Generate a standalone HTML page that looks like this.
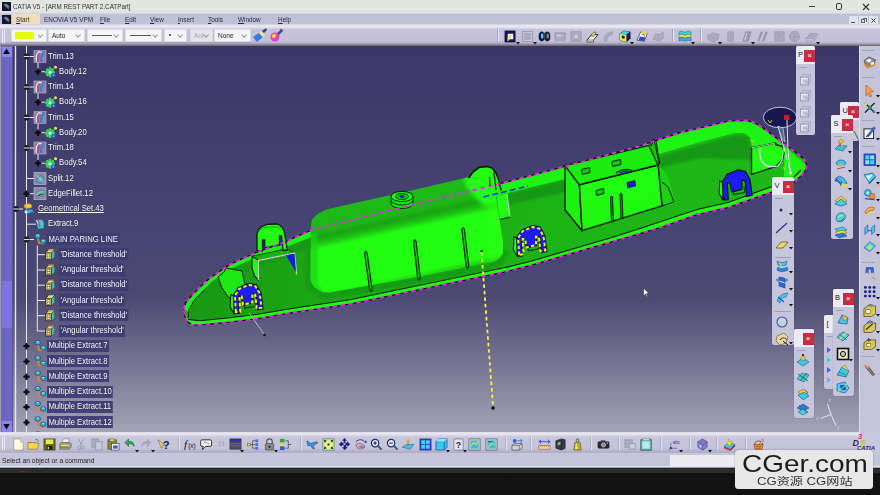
<!DOCTYPE html>
<html><head><meta charset="utf-8"><title>CATIA V5 - [ARM REST PART 2.CATPart]</title>
<style>
*{margin:0;padding:0;box-sizing:border-box}
html,body{width:880px;height:495px;overflow:hidden;background:#111}
body{position:relative;font-family:"Liberation Sans","Noto Sans CJK SC",sans-serif;font-size:8px;color:#222}
.abs{position:absolute}
#title{left:0;top:0;width:880px;height:14px;background:linear-gradient(#e2e5e2 0,#e2e4e1 12px,#d0cfe0 14px)}
#title .t{left:13px;top:1px;font-size:7.8px;line-height:11px;color:#333;white-space:nowrap;transform:scaleX(.81);transform-origin:0 50%}
#menu{left:0;top:13.5px;width:880px;height:11px;background:#c2bfd8}
#menu span{position:absolute;top:0;font-size:7.8px;line-height:11px;color:#2a2a3a;white-space:nowrap;transform:scaleX(.82);transform-origin:0 50%}
#menu u{text-decoration:underline;text-underline-offset:1px}
#tb{left:0;top:23.5px;width:880px;height:23px;background:linear-gradient(#c6c3da 0,#e4e3ee 1px,#e9e8f1 2.5px,#dddbe9 4px,#c6c3db 5.5px,#c4c0da 17px,#b4b1c8 19px,#8c8b98 20.5px,#727278 21.5px,#4a4866 23px)}
.dd{position:absolute;top:5px;height:13px;background:#f5f5f9;border:1px solid #dcdbe8;border-radius:1px;font-size:7.6px;line-height:11px;color:#222;padding-left:3px;white-space:nowrap;box-shadow:0 1px 1px rgba(120,120,150,.35)}
.dd:after{content:"";position:absolute;right:3.5px;top:2.5px;width:3.4px;height:3.4px;border-right:.9px solid #999;border-bottom:.9px solid #999;transform:rotate(45deg)}
.dd i{position:absolute;left:4px;top:5px;height:1px;background:#555;display:block}
#vp{left:0;top:46px;width:880px;height:386px;overflow:hidden;background:linear-gradient(#3c3768 0,#423e6e 27%,#484672 52%,#4b4873 62%,#4e4a73 65.6%,#6e6a8c 78.6%,#8e8ca5 91.5%,#a4a2b4 100%)}
#btb{left:0;top:432px;width:880px;height:22px;background:linear-gradient(#dcdbe8 0,#e8e7f0 1.5px,#dedde9 3px,#c9c7dd 5px,#c6c4da 16px,#b6b4cb 19px,#aeacc4 21px,#e4e3ee 22px)}
#sb{left:0;top:454px;width:880px;height:13.5px;background:linear-gradient(#c6c4da 0,#c6c4da 11.5px,#e4e3ee 12.5px,#a0a0a8 13.5px)}
#sb .t{left:2px;top:1px;font-size:7.8px;line-height:11px;color:#222;white-space:nowrap;transform:scaleX(.86);transform-origin:0 50%}
#blk{left:0;top:467.5px;width:880px;height:27.5px;background:linear-gradient(#1c1e1a 0,#2d2f2b 1.2px,#2a2c28 4.5px,#0b0b0b 6px,#121212 8px,#121212 100%)}
.tr{position:absolute;font-size:8.2px;transform:scaleX(.94);transform-origin:0 50%;line-height:11px;color:#fff;white-space:nowrap;text-shadow:0 0 1px rgba(20,20,60,.9)}
.tr.sel{background:rgba(62,60,115,.95);padding:.5px 1.5px;margin-left:-1.5px;margin-top:-.5px}
.ft{position:absolute;background:#c6c5dc;border-radius:2px;box-shadow:0 0 1px rgba(40,40,80,.6)}
.ft .hd{position:absolute;left:0;top:0;right:0;height:18px;background:#eceaf4;border-radius:2px 2px 0 0;font-size:7.5px;line-height:17px;color:#222;padding-left:2.5px;overflow:hidden}
.ft .x{position:absolute;right:0;top:4px;width:11px;height:12px;background:#c82c44;color:#fff;font-size:8px;line-height:11px;text-align:center}
.sep{position:absolute;background:#9f9eb8}
</style></head><body>
<div id="title" class="abs"><svg style="position:absolute;left:2px;top:2px;" width="9" height="9" viewBox="0 0 9 9"><rect width="9" height="9" fill="#15152a"/><path d="M1.5 2 C4 1.5 6.5 3.5 7.5 7.5 C5.5 6 3 5 1.5 2Z" fill="#3f8fe8"/><path d="M3 1.5 C5 2 7 3.5 7.8 6 C6 4.5 4.5 3 3 1.5Z" fill="#f08a3c"/></svg><div class="abs t">CATIA V5 - [ARM REST PART 2.CATPart]</div><div style="position:absolute;left:809px;top:6px;width:6px;height:1px;background:#444"></div><div style="position:absolute;left:835.5px;top:3px;width:6.5px;height:6.5px;border:1.2px solid #333;border-radius:1.8px"></div><svg style="position:absolute;left:861.5px;top:2.5px;" width="8" height="8" viewBox="0 0 8 8"><path d="M1 1 L7 7 M7 1 L1 7" stroke="#333" stroke-width="1.1" fill="none"/></svg></div>
<div id="menu" class="abs"><svg style="position:absolute;left:2px;top:1px;" width="9" height="9" viewBox="0 0 9 9"><rect width="9" height="9" fill="#15152a"/><path d="M1.5 2 C4 1.5 6.5 3.5 7.5 7.5 C5.5 6 3 5 1.5 2Z" fill="#3f8fe8"/><path d="M3 1.5 C5 2 7 3.5 7.8 6 C6 4.5 4.5 3 3 1.5Z" fill="#f08a3c"/></svg><div style="position:absolute;left:12px;top:0px;width:28px;height:11px;background:#f1dfba"></div><span style="left:16px"><u>S</u>tart</span><span style="left:44px">ENOVIA V5 VPM</span><span style="left:100px"><u>F</u>ile</span><span style="left:125px"><u>E</u>dit</span><span style="left:150px"><u>V</u>iew</span><span style="left:178px"><u>I</u>nsert</span><span style="left:208px"><u>T</u>ools</span><span style="left:238px"><u>W</u>indow</span><span style="left:278px"><u>H</u>elp</span><div style="position:absolute;left:849px;top:2px;width:9px;height:9px;background:#e3e2ef"></div><div style="position:absolute;left:859px;top:2px;width:9px;height:9px;background:#e3e2ef"></div><div style="position:absolute;left:869px;top:2px;width:9px;height:9px;background:#e3e2ef"></div><div style="position:absolute;left:851px;top:8px;width:4px;height:1px;background:#555"></div><div style="position:absolute;left:861px;top:5px;width:4px;height:4px;border:1px solid #666"></div><div style="position:absolute;left:863px;top:4px;width:4px;height:4px;border:1px solid #666;border-bottom:none;border-left:none"></div><svg style="position:absolute;left:870px;top:3px;" width="7" height="7" viewBox="0 0 7 7"><path d="M1.5 1.5 L5.5 5.5 M5.5 1.5 L1.5 5.5" stroke="#444" stroke-width="1" fill="none"/></svg></div>
<div id="tb" class="abs"><div style="position:absolute;left:2px;top:6px;width:1px;height:13px;background:#ecebf4"></div><div style="position:absolute;left:4px;top:6px;width:1px;height:13px;background:#ecebf4"></div><div class="dd" style="margin-top:.5px;left:11px;width:36px"><b style="position:absolute;left:3px;top:2px;width:19px;height:7px;background:#e6ff00"></b></div><div class="dd" style="margin-top:.5px;left:48px;width:37px"><span style="display:inline-block;transform:scaleX(.86);transform-origin:0 50%">Auto</span></div><div class="dd" style="margin-top:.5px;left:87px;width:36px"><i style="width:20px"></i></div><div class="dd" style="margin-top:.5px;left:125px;width:37px"><i style="width:21px"></i></div><div class="dd" style="margin-top:.5px;left:164px;width:23px"><b style="position:absolute;left:4px;top:4px;width:2px;height:2px;background:#333;border-radius:1px"></b></div><div class="dd" style="margin-top:.5px;left:190px;width:23px;color:#aaa;background:#e4e3ee"><span style="display:inline-block;transform:scaleX(.86);transform-origin:0 50%">Aut</span></div><div class="dd" style="margin-top:.5px;left:214px;width:37px"><span style="display:inline-block;transform:scaleX(.86);transform-origin:0 50%">None</span></div><svg style="position:absolute;left:252px;top:4px;" width="16" height="15" viewBox="0 0 16 15"><path d="M1 9 L7 5 L11 9 L5 14 Z" fill="#3a7ce0"/><path d="M7 5 L9 3 L13 7 L11 9Z" fill="#f0e68c"/><path d="M10 3 L14 0 L15 2 L12 5Z" fill="#2a3c90"/></svg><svg style="position:absolute;left:269px;top:4px;" width="15" height="15" viewBox="0 0 15 15"><circle cx="6" cy="9" r="4.5" fill="#e040c0"/><circle cx="5" cy="8" r="2" fill="#ffe030"/><path d="M8 5 L13 1 L14 3 L10 7Z" fill="#2a4ab0"/><path d="M11 1l1 1" stroke="#e03030" stroke-width="1.5"/></svg></div>
<div id="vp" class="abs"><div class="abs" style="left:0;top:-46px;width:880px;height:495px">
<svg style="position:absolute;left:0px;top:0px;" width="880" height="495" viewBox="0 0 880 495"><defs>
<linearGradient id="gf" gradientUnits="userSpaceOnUse" x1="190" y1="0" x2="780" y2="0"><stop offset="0" stop-color="#1a9814"/><stop offset=".2" stop-color="#1ba614"/><stop offset=".55" stop-color="#1cb216"/><stop offset="1" stop-color="#1eb818"/></linearGradient>
<linearGradient id="gb1" gradientUnits="userSpaceOnUse" x1="395" y1="192" x2="415" y2="282"><stop offset="0" stop-color="#1ebc18"/><stop offset=".24" stop-color="#1db616"/><stop offset=".3" stop-color="#1aa414"/><stop offset=".36" stop-color="#1cc014"/><stop offset=".43" stop-color="#22fe12"/><stop offset=".9" stop-color="#22fe12"/><stop offset=".96" stop-color="#1cd014"/><stop offset="1" stop-color="#1cb016"/></linearGradient>
<linearGradient id="gb2" gradientUnits="userSpaceOnUse" x1="580" y1="186" x2="584" y2="232"><stop offset="0" stop-color="#22fe12"/><stop offset="1" stop-color="#1ef412"/></linearGradient>
<filter id="bl"><feGaussianBlur stdDeviation="2"/></filter><filter id="bl05"><feGaussianBlur stdDeviation=".8"/></filter><filter id="bl1"><feGaussianBlur stdDeviation="1.2"/></filter>
</defs><path d="M183.7 309 L185.5 303 L190 297.5 L199 288 L210 278 L230 264.5 L255 253 L287 241 L314 229 L499 184 L565 166.5 L640 146 L678 133 L700 128 L729 121 L746.7 120.5 L753 122 L758 124.5 L767 131 L804.4 159 L806.5 164.4 L806 169 L803 173.5 L794.4 182 L773 191.5 L728 207.5 L697 214.5 L662 227 L640 233.5 L611 242 L530 265.5 L504 272 L350 304 L290 313 L258 318.5 L230 322 L200 325 L192 325 L187 321 L184.5 315Z" fill="url(#gf)" stroke="#041e04" stroke-width="1.200" stroke-linejoin="round"/><clipPath id="cfl"><path d="M183.7 309 L185.5 303 L190 297.5 L199 288 L210 278 L230 264.5 L255 253 L287 241 L314 229 L499 184 L565 166.5 L640 146 L678 133 L700 128 L729 121 L746.7 120.5 L753 122 L758 124.5 L767 131 L804.4 159 L806.5 164.4 L806 169 L803 173.5 L794.4 182 L773 191.5 L728 207.5 L697 214.5 L662 227 L640 233.5 L611 242 L530 265.5 L504 272 L350 304 L290 313 L258 318.5 L230 322 L200 325 L192 325 L187 321 L184.5 315Z"/></clipPath><g clip-path="url(#cfl)"><path d="M199 295 L230 271 L255 260 L287 248 L314 237 L499 196 L565 180 L640 161 L700 145 L735 135 L748 136 L752 150 L752 160 L700 158 L640 173 L565 192 L499 207 L314 247 L287 256 L255 268 L230 279 L204 300Z" fill="#199812" filter="url(#bl1)"/><path d="M183 309 L190 297 L199 288 L210 278 L230 264.5 L255 253 L287 241 L314 229 L499 184 L565 166.5 L640 146 L700 128 L729 121 L747 120.5 L767 131 L806 165 L806 175 L790 186 L784 176 L784 150 L776 142 L752 147 L750 137 L744 133 L735 133 L700 142 L640 159.5 L565 179 L499 195 L314 236 L287 246.5 L255 258 L230 269 L212 281.5 L202 291 L193 301 L189 312Z" fill="#1ef414"/><path d="M188 319.5 L200 320.8 L230 317.8 L258 314.2 L290 308.8 L350 299.8 L504 267.8 L530 261.5 L611 237.8 L640 228.5 L697 209.5 L728 202.5 L772 186.5 L793 178 L801 170 L812 165 L800 195 L773 191.5 L728 207.5 L697 214.5 L662 227 L640 233.5 L611 242 L530 265.5 L504 272 L350 304 L290 313 L258 318.5 L230 322 L200 325 L192 325 L187 321 L184.5 315 L182 318 L186 314Z" fill="#22fe12"/></g><path d="M188 319.5 L200 320.8 L230 317.8 L258 314.2 L290 308.8 L350 299.8 L504 267.8 L530 261.5 L611 237.8 L640 228.5 L697 209.5 L728 202.5 L772 186.5 L793 178 L801 170" fill="none" stroke="#041e04" stroke-width="1.100"/><path d="M183.7 309 L185.5 303 L190 297.5 L199 288 L210 278 L230 264.5 L255 253 L287 241 L314 229 L499 184 L565 166.5 L640 146 L678 133 L700 128 L729 121 L746.7 120.5 L753 122 L758 124.5 L767 131 L804.4 159 L806.5 164.4 L806 169 L803 173.5 L794.4 182 L773 191.5 L728 207.5 L697 214.5 L662 227 L640 233.5 L611 242 L530 265.5 L504 272 L350 304 L290 313 L258 318.5 L230 322 L200 325 L192 325 L187 321 L184.5 315Z" fill="none" stroke="#041e04" stroke-width="1.200" stroke-linejoin="round"/><path d="M188 318 L189 309 L195 299 L205 290" fill="none" stroke="#041e04" stroke-width=".8"/><path d="M660 166 L668 176 L672 190 L676 203 L664 206 L661 190Z" fill="#1cd014"/><path d="M662 182 L668 187 L671 194 L674 202 L662 206" fill="none" stroke="#041e04" stroke-width="1"/><path d="M306 244 L311 240 L311 280 L324 292 L420 277 L496 262 L504 250 L509 252 L501 267 L420 284 L322 300 L305 288Z" fill="#199812" opacity=".8" filter="url(#bl1)"/><path d="M311 224 L312.5 219 L317 214.5 L326 209.5 L420 188.5 L467 177.5 L477 177.5 L484 181 L491 188 L496 197 L503 243 L503 253 L500 258 L494 261.5 L420 276.5 L330 292.5 L322 292 L314 287 L310.6 280Z" fill="url(#gb1)"/><clipPath id="cb1"><path d="M311 224 L312.5 219 L317 214.5 L326 209.5 L420 188.5 L467 177.5 L477 177.5 L484 181 L491 188 L496 197 L503 243 L503 253 L500 258 L494 261.5 L420 276.5 L330 292.5 L322 292 L314 287 L310.6 280Z"/></clipPath><g clip-path="url(#cb1)"><path d="M305 236 L316 232 L318 240 L318 284 L326 296 L318 296 L305 287Z" fill="#1cd414" opacity=".7" filter="url(#bl1)"/><path d="M486 196 L498 192 L510 243 L508 258 L500 266 L488 266Z" fill="#34ff1c" opacity=".3" filter="url(#bl1)"/><path d="M462 170 L505 166 L505 204 L484 206 L474 196 L466 186Z" fill="#22fe12" filter="url(#bl)"/></g><path d="M364.5 253q1.300-3.500 2.600 0L372.3 290q-1.300 3-2.600 0Z" fill="#12c80e" stroke="#041e04" stroke-width="1.100"/><path d="M413.5 241.5q1.300-3.500 2.600 0L420.3 278.5q-1.300 3-2.600 0Z" fill="#12c80e" stroke="#041e04" stroke-width="1.100"/><path d="M461.8 229.5q1.300-3.500 2.600 0L468.8 266.5q-1.300 3-2.600 0Z" fill="#12c80e" stroke="#041e04" stroke-width="1.100"/><path d="M391 203.500v-7a11 5 0 0 1 22 0v7a11 5 0 0 1-22 0z" fill="#16e60e" stroke="#041e04" stroke-width=".9"/><path d="M391 200a11 5 0 0 0 22 0" fill="none" stroke="#041e04" stroke-width=".8"/><ellipse cx="402" cy="196.500" rx="11" ry="5" fill="#22fe12" stroke="#041e04" stroke-width=".9"/><ellipse cx="402" cy="196.500" rx="6.500" ry="3" fill="#0aca0a" stroke="#041e04" stroke-width=".8"/><ellipse cx="402" cy="196.500" rx="2.600" ry="1.400" fill="#1a1ae8"/><path d="M469 177.5 L473 172 L479 167.5 L487 166.4 L492 168 L496 173 L498 178 L501 190 L497 197 L491 188 L484 181 L477 177.5Z" fill="#22fe12"/><path d="M469 177.5 L473 172 L479 167.5 L487 166.4 L492 168 L496 173 L498 178 L501 190" fill="none" stroke="#041e04" stroke-width="1.600" stroke-linejoin="round" stroke-linecap="round"/><path d="M489.500 177l.5 9M494 172l2 18" stroke="#041e04" stroke-width="1.200"/><path d="M496.5 196 L507 193.5 L510 217 L500 219.5Z" fill="#22fe12"/><path d="M507 193.500L510 217" stroke="#d8d8e8" stroke-width=".9"/><path d="M510 217L500 219.500" stroke="#041e04" stroke-width="1.200"/><path d="M565 165.6 L579.4 184.8 L582 230.7 L565 209.7Z" fill="#1cf210" stroke="#041e04" stroke-width="1.400" stroke-linejoin="round"/><path d="M579.4 184.8 L658 165 L662 205.8 L582 230.7Z" fill="url(#gb2)" stroke="#041e04" stroke-width="1.400" stroke-linejoin="round"/><path d="M565 165.6 L649 145.4 L658 165 L579.4 184.8Z" fill="#1aec10" stroke="#041e04" stroke-width="1.400" stroke-linejoin="round"/><path d="M649 145.4 L654 139.5 L659.4 163.8 L658 165Z" fill="#0aca0a" stroke="#041e04" stroke-width="1"/><path d="M651 146l3-6.500M656 141l3.400 23" stroke="#041e04" stroke-width="1.100"/><path d="M581.5 169.5 L589.5 167.5 L590 172.5 L582 174.5Z" fill="#0aca0a" stroke="#041e04" stroke-width="1"/><path d="M612 161.5 L620.5 159.5 L621 164.5 L612.5 166.5Z" fill="#0aca0a" stroke="#041e04" stroke-width="1"/><path d="M596 190.5 L603.5 188.5 L604 193.5 L596.5 195.5Z" fill="#0aca0a" stroke="#041e04" stroke-width="1"/><path d="M627 182.5 L635 180.5 L635.5 186 L627.5 188Z" fill="#1a1ae8" stroke="#041e04" stroke-width=".7"/><path d="M616 173q8-6 16-2.500" fill="none" stroke="#041e04" stroke-width="1.100"/><path d="M619 172.500q6-3.500 11-1.500l-1 1.500q-5-1-9 1z" fill="#2020c8"/><path d="M610.5 197q1-2 2 0L613.5 222h-2Z" fill="#06ac06" stroke="#041e04" stroke-width="1"/><path d="M620 194q1-2 2 0L623 218.5h-2Z" fill="#06ac06" stroke="#041e04" stroke-width="1"/><path d="M751.5 147.8 L775.5 143 L776 145 L782 146 L784 153 L783 158 L779 163.5 L775.5 166.7 L751.5 174.4Z" fill="#22fe12" stroke="#041e04" stroke-width="1.400" stroke-linejoin="round"/><path d="M252 256 L258.4 260.5 L294.5 253 L287.4 249Z" fill="#1cb216" stroke="#041e04" stroke-width=".6"/><path d="M252 256 L258.4 260.5 L258.4 280 L254.5 276 L252 268Z" fill="#22fe12" stroke="#041e04" stroke-width="1.100" stroke-linejoin="round"/><path d="M258.4 280 L258.4 260.5 L294.5 253 L296.6 274.4" fill="none" stroke="#c4ccc4" stroke-width="1.300"/><path d="M286 255.3 L294.5 253.8 L296 272.3Z" fill="#1a1ae8"/><path d="M257 250.5 L257 233.5 L259 229 L262 226.3 L267 224.3 L277 224 L280 225.5 L282.4 227.7 L284 231 L285 236 L287.4 250 L283 250.5 L281.5 236 L279.5 236 L279.5 245 L264.8 248 L264.8 240 L262.5 240 L262.5 251Z" fill="#22fe12" stroke="#041e04" stroke-width="1.300" stroke-linejoin="round"/><path d="M263.600 241v9M280.500 237.500v8" stroke="#1a1aa8" stroke-width="1.600"/><path d="M259.500 230.500q3-3 7.500-3.500h9q3 0 5 3" fill="none" stroke="#041e04" stroke-width=".7" opacity=".6"/><path d="M218 277 L224 272 L226 268 L242 271 L246 290 L243 292 L240 296 L233 300 L228 297 L222 288Z" fill="#1ee814"/><path d="M218 277 L224 272 L226 268 L242 271 L246 290 L243 292 L240 296" fill="none" stroke="#041e04" stroke-width="1"/><path d="M218 277 L222 288 L228 297 L233 300" fill="none" stroke="#041e04" stroke-width="1"/><path d="M230.72 294.18 L230.18 307.14 L233.96 313.62 L233.96 296.34Z" fill="#22fe12" stroke="#041e04" stroke-width="1.100" stroke-linejoin="round"/><path d="M234.5 313.6 L233.4 295.3 L238.3 287.7 L249.1 283.4 L256.6 285.0 L261.0 293.1 L263.1 308.8 L257.7 309.8 L256.1 294.2 L252.9 293.6 L252.9 302.8 L242.6 305.5 L241.0 296.3 L238.3 296.3 L239.4 313.1Z" fill="#1c1cf0" stroke="#041e04" stroke-width="1.300" stroke-linejoin="round"/><path d="M244.22 300.66 L244.76 308.22 L255.56 306.06 L255.02 299.58" fill="none" stroke="#041e04" stroke-width=".9"/><path d="M235.8 312.1 L234.9 295.6 L239.3 288.8 L249.0 284.9 L255.7 286.4 L259.7 293.6 L261.6 307.8 L256.7 308.7 L255.3 294.6 L252.4 294.1 L252.4 302.4 L243.1 304.8 L241.7 296.5 L239.3 296.5 L240.3 311.6Z" fill="none" stroke="#f6ea30" stroke-width="2" stroke-dasharray="3.400 2.400"/><path d="M513.9 236.6 L513.35 249.8 L517.2 256.4 L517.2 238.8Z" fill="#22fe12" stroke="#041e04" stroke-width="1.100" stroke-linejoin="round"/><path d="M517.8 256.4 L516.6 237.7 L521.6 230.0 L532.6 225.6 L540.3 227.2 L544.7 235.5 L546.9 251.4 L541.4 252.6 L539.8 236.6 L536.5 236.1 L536.5 245.4 L526.0 248.2 L524.4 238.8 L521.6 238.8 L522.7 255.8Z" fill="#1c1cf0" stroke="#041e04" stroke-width="1.300" stroke-linejoin="round"/><path d="M527.65 243.2 L528.2 250.9 L539.2 248.7 L538.65 242.1" fill="none" stroke="#041e04" stroke-width=".9"/><path d="M519.2 254.9 L518.1 238.0 L522.6 231.1 L532.5 227.1 L539.4 228.6 L543.4 236.1 L545.4 250.4 L540.4 251.4 L539.0 237.0 L536.0 236.6 L536.0 245.0 L526.5 247.5 L525.1 239.0 L522.6 239.0 L523.6 254.3Z" fill="none" stroke="#f6ea30" stroke-width="2" stroke-dasharray="3.400 2.400"/><path d="M719.72 180.68 L719.18 193.64 L722.96 200.12 L722.96 182.84Z" fill="#22fe12" stroke="#041e04" stroke-width="1.100" stroke-linejoin="round"/><path d="M723.5 200.1 L722.4 181.8 L727.3 174.2 L738.1 169.9 L745.6 171.5 L750.0 179.6 L752.1 195.3 L746.7 196.3 L745.1 180.7 L741.9 180.1 L741.9 189.3 L731.6 192.0 L730.0 182.8 L727.3 182.8 L728.4 199.6Z" fill="#1c1cf0" stroke="#041e04" stroke-width="1.300" stroke-linejoin="round"/><path d="M733.22 187.16 L733.76 194.72 L744.56 192.56 L744.02 186.08" fill="none" stroke="#041e04" stroke-width=".9"/><path d="M183.7 309 L185.5 303 L190 297.5 L199 288 L210 278 L230 264.5 L255 253 L287 241 L314 229 L499 184 L565 166.5 L640 146 L678 133 L700 128 L729 121 L746.7 120.5 L753 122 L758 124.5 L767 131 L804.4 159 L806.5 164.4 L806 169 L803 173.5 L794.4 182 L773 191.5 L728 207.5 L697 214.5 L662 227 L640 233.5 L611 242 L530 265.5 L504 272 L350 304 L290 313 L258 318.5 L230 322 L200 325 L192 325 L187 321 L184.5 315Z" fill="none" stroke="#f224f2" stroke-width="1.800" stroke-dasharray="4.500 3.500" stroke-linejoin="round"/><path d="M483.500 197L528 186" stroke="#1a30e8" stroke-width="1.600" stroke-dasharray="6 3"/><path d="M481.500 252L493 406" stroke="#f4f438" stroke-width="1.800" stroke-dasharray="3.500 3"/><circle cx="481.500" cy="251" r="1.200" fill="#111"/><circle cx="493" cy="408" r="1.800" fill="#0a0a14"/><path d="M249 313L264 334" stroke="#b8b8c8" stroke-width="1"/><circle cx="264.500" cy="335" r="1.300" fill="#111"/><ellipse cx="780" cy="117.500" rx="16.700" ry="10.300" fill="#17174f" stroke="#d8d0f0" stroke-width=".9"/><rect x="784" y="115" width="5" height="5" fill="#e01020"/><path d="M787 120L788 150L790.500 172" fill="none" stroke="#e0d8f4" stroke-width="1"/><path d="M778 126L790.500 172" fill="none" stroke="#e0d8f4" stroke-width="1"/><path d="M760 148Q758 170 778 166Q784 160 783 148" fill="none" stroke="#e0d8f4" stroke-width="1.100"/><path d="M751.500 147.800L775.500 143" stroke="#e0d8f4" stroke-width=".8"/><path d="M778 126Q781 138 785 142L783 128Z" fill="#3a8a90" fill-opacity=".7" stroke="#e0d8f4" stroke-width=".6"/><circle cx="790.500" cy="173" r="1.500" fill="#e8e0ff"/><path d="M768 120l2 3 2-3" stroke="#d8d040" stroke-width=".9" fill="none"/><path d="M751 140l1.500 2.500 1.500-2.500" stroke="#c8e040" stroke-width=".8" fill="none"/><path d="M783 167l1.500 2.500 1.500-2.500" stroke="#c8e040" stroke-width=".8" fill="none"/><path d="M643.500 288v8l2-2 1.500 3 1-.5-1.500-3h2.500z" fill="#f4f4f8" stroke="#222" stroke-width=".5"/><path d="M831 414.500L827.500 404M831 414.500L820.500 418.500M831 414.500L836 425.500" stroke="#dcdbe8" stroke-width="1.100" fill="none"/><text x="828.500" y="402" font-family="Liberation Sans" font-size="5" fill="#d0cfe0">z</text><text x="837" y="429" font-family="Liberation Sans" font-size="5" fill="#d0cfe0">y</text><text x="816" y="420" font-family="Liberation Sans" font-size="5" fill="#d0cfe0">x</text></svg>
<div style="position:absolute;left:0px;top:46px;width:12.5px;height:387px;background:#6e66c0;border-left:1px solid #a0a0aa;border-right:1px solid #5a5498"></div><div style="position:absolute;left:1.5px;top:46.5px;width:10px;height:10px;background:#8c84e6"></div><svg style="position:absolute;left:3px;top:48px;" width="7" height="7" viewBox="0 0 7 7"><path d="M3.500 .5L6.800 6H.2z" fill="#0a0a18"/></svg><div style="position:absolute;left:1.5px;top:281px;width:10px;height:47px;background:#7b73de"></div><div style="position:absolute;left:1.5px;top:421px;width:10px;height:11px;background:#8c84e6"></div><svg style="position:absolute;left:3px;top:423px;" width="7" height="7" viewBox="0 0 7 7"><path d="M3.500 6.500L6.800 1H.2z" fill="#0a0a18"/></svg><svg style="position:absolute;left:0px;top:0px;" width="140" height="495" viewBox="0 0 140 495"><path d="M15.500 46V433" stroke="#e8e8f2" stroke-width="1.400"/><path d="M26.500 46V433" stroke="#e8e8f2" stroke-width="1"/><path d="M26.500 56.5H34" stroke="#e8e8f2" stroke-width="1"/><circle cx="26.5" cy="56.5" r="3" fill="#1c1c24"/><path d="M23.7 56.5h5.600" stroke="#d8d8e0" stroke-width="1.100"/><rect x="34" y="50.5" width="12" height="12" fill="#85839e" stroke="#b8b6cc" stroke-width=".6"/><path d="M36.5 61.5c-1-5 0-8 3-10" stroke="#e8e8f4" stroke-width="1.300" fill="none"/><path d="M38 61.5c0-4 0-6 1-8" stroke="#c84858" stroke-width="1.800" fill="none"/><path d="M41 61.5c0-5 1-8 3-10" stroke="#3a7ae0" stroke-width="2" fill="none"/><path d="M43.5 61.5v-5" stroke="#38b8d8" stroke-width="1.200" fill="none"/><path d="M39 51.5l3 1" stroke="#f0f0f8" stroke-width="1"/><path d="M38 62.5V71.7H45" stroke="#e8e8f2" stroke-width="1" fill="none"/><circle cx="38" cy="71.7" r="2.300" fill="#2a2a3a"/><path d="M34.8 71.7h6.400M38 68.5v6.400" stroke="#0a0a10" stroke-width="1.700"/><circle cx="53.60" cy="72.20" r="1.500" fill="#30d858"/><circle cx="52.55" cy="74.75" r="1.500" fill="#30d858"/><circle cx="50.00" cy="75.80" r="1.500" fill="#30d858"/><circle cx="47.45" cy="74.75" r="1.500" fill="#30d858"/><circle cx="46.40" cy="72.20" r="1.500" fill="#30d858"/><circle cx="47.45" cy="69.65" r="1.500" fill="#30d858"/><circle cx="50.00" cy="68.60" r="1.500" fill="#30d858"/><circle cx="52.55" cy="69.65" r="1.500" fill="#30d858"/><circle cx="50" cy="72.2" r="3" fill="#38d060"/><circle cx="50" cy="72.2" r="1.500" fill="#e8fff0"/><circle cx="55.5" cy="67.2" r="1.500" fill="#f8e830"/><circle cx="53.5" cy="75.2" r="2.300" fill="#2450e0"/><circle cx="53.5" cy="75.2" r=".9" fill="#9ab8ff"/><path d="M26.500 87H34" stroke="#e8e8f2" stroke-width="1"/><circle cx="26.5" cy="87" r="3" fill="#1c1c24"/><path d="M23.7 87h5.600" stroke="#d8d8e0" stroke-width="1.100"/><rect x="34" y="81" width="12" height="12" fill="#85839e" stroke="#b8b6cc" stroke-width=".6"/><path d="M36.5 92c-1-5 0-8 3-10" stroke="#e8e8f4" stroke-width="1.300" fill="none"/><path d="M38 92c0-4 0-6 1-8" stroke="#c84858" stroke-width="1.800" fill="none"/><path d="M41 92c0-5 1-8 3-10" stroke="#3a7ae0" stroke-width="2" fill="none"/><path d="M43.5 92v-5" stroke="#38b8d8" stroke-width="1.200" fill="none"/><path d="M39 82l3 1" stroke="#f0f0f8" stroke-width="1"/><path d="M38 93V102.2H45" stroke="#e8e8f2" stroke-width="1" fill="none"/><circle cx="38" cy="102.2" r="2.300" fill="#2a2a3a"/><path d="M34.8 102.2h6.400M38 99.0v6.400" stroke="#0a0a10" stroke-width="1.700"/><circle cx="53.60" cy="102.70" r="1.500" fill="#30d858"/><circle cx="52.55" cy="105.25" r="1.500" fill="#30d858"/><circle cx="50.00" cy="106.30" r="1.500" fill="#30d858"/><circle cx="47.45" cy="105.25" r="1.500" fill="#30d858"/><circle cx="46.40" cy="102.70" r="1.500" fill="#30d858"/><circle cx="47.45" cy="100.15" r="1.500" fill="#30d858"/><circle cx="50.00" cy="99.10" r="1.500" fill="#30d858"/><circle cx="52.55" cy="100.15" r="1.500" fill="#30d858"/><circle cx="50" cy="102.7" r="3" fill="#38d060"/><circle cx="50" cy="102.7" r="1.500" fill="#e8fff0"/><circle cx="55.5" cy="97.7" r="1.500" fill="#f8e830"/><circle cx="53.5" cy="105.7" r="2.300" fill="#2450e0"/><circle cx="53.5" cy="105.7" r=".9" fill="#9ab8ff"/><path d="M26.500 117.5H34" stroke="#e8e8f2" stroke-width="1"/><circle cx="26.5" cy="117.5" r="3" fill="#1c1c24"/><path d="M23.7 117.5h5.600" stroke="#d8d8e0" stroke-width="1.100"/><rect x="34" y="111.5" width="12" height="12" fill="#85839e" stroke="#b8b6cc" stroke-width=".6"/><path d="M36.5 122.5c-1-5 0-8 3-10" stroke="#e8e8f4" stroke-width="1.300" fill="none"/><path d="M38 122.5c0-4 0-6 1-8" stroke="#c84858" stroke-width="1.800" fill="none"/><path d="M41 122.5c0-5 1-8 3-10" stroke="#3a7ae0" stroke-width="2" fill="none"/><path d="M43.5 122.5v-5" stroke="#38b8d8" stroke-width="1.200" fill="none"/><path d="M39 112.5l3 1" stroke="#f0f0f8" stroke-width="1"/><path d="M38 123.5V132.7H45" stroke="#e8e8f2" stroke-width="1" fill="none"/><circle cx="38" cy="132.7" r="2.300" fill="#2a2a3a"/><path d="M34.8 132.7h6.400M38 129.5v6.400" stroke="#0a0a10" stroke-width="1.700"/><circle cx="53.60" cy="133.20" r="1.500" fill="#30d858"/><circle cx="52.55" cy="135.75" r="1.500" fill="#30d858"/><circle cx="50.00" cy="136.80" r="1.500" fill="#30d858"/><circle cx="47.45" cy="135.75" r="1.500" fill="#30d858"/><circle cx="46.40" cy="133.20" r="1.500" fill="#30d858"/><circle cx="47.45" cy="130.65" r="1.500" fill="#30d858"/><circle cx="50.00" cy="129.60" r="1.500" fill="#30d858"/><circle cx="52.55" cy="130.65" r="1.500" fill="#30d858"/><circle cx="50" cy="133.2" r="3" fill="#38d060"/><circle cx="50" cy="133.2" r="1.500" fill="#e8fff0"/><circle cx="55.5" cy="128.2" r="1.500" fill="#f8e830"/><circle cx="53.5" cy="136.2" r="2.300" fill="#2450e0"/><circle cx="53.5" cy="136.2" r=".9" fill="#9ab8ff"/><path d="M26.500 148H34" stroke="#e8e8f2" stroke-width="1"/><circle cx="26.5" cy="148" r="3" fill="#1c1c24"/><path d="M23.7 148h5.600" stroke="#d8d8e0" stroke-width="1.100"/><rect x="34" y="142" width="12" height="12" fill="#85839e" stroke="#b8b6cc" stroke-width=".6"/><path d="M36.5 153c-1-5 0-8 3-10" stroke="#e8e8f4" stroke-width="1.300" fill="none"/><path d="M38 153c0-4 0-6 1-8" stroke="#c84858" stroke-width="1.800" fill="none"/><path d="M41 153c0-5 1-8 3-10" stroke="#3a7ae0" stroke-width="2" fill="none"/><path d="M43.5 153v-5" stroke="#38b8d8" stroke-width="1.200" fill="none"/><path d="M39 143l3 1" stroke="#f0f0f8" stroke-width="1"/><path d="M38 154V163.2H45" stroke="#e8e8f2" stroke-width="1" fill="none"/><circle cx="38" cy="163.2" r="2.300" fill="#2a2a3a"/><path d="M34.8 163.2h6.400M38 160.0v6.400" stroke="#0a0a10" stroke-width="1.700"/><circle cx="53.60" cy="163.70" r="1.500" fill="#30d858"/><circle cx="52.55" cy="166.25" r="1.500" fill="#30d858"/><circle cx="50.00" cy="167.30" r="1.500" fill="#30d858"/><circle cx="47.45" cy="166.25" r="1.500" fill="#30d858"/><circle cx="46.40" cy="163.70" r="1.500" fill="#30d858"/><circle cx="47.45" cy="161.15" r="1.500" fill="#30d858"/><circle cx="50.00" cy="160.10" r="1.500" fill="#30d858"/><circle cx="52.55" cy="161.15" r="1.500" fill="#30d858"/><circle cx="50" cy="163.7" r="3" fill="#38d060"/><circle cx="50" cy="163.7" r="1.500" fill="#e8fff0"/><circle cx="55.5" cy="158.7" r="1.500" fill="#f8e830"/><circle cx="53.5" cy="166.7" r="2.300" fill="#2450e0"/><circle cx="53.5" cy="166.7" r=".9" fill="#9ab8ff"/><path d="M26.500 178.5H34" stroke="#e8e8f2" stroke-width="1"/><rect x="34" y="172.5" width="12" height="12" fill="#8e8ca8" stroke="#c0bed4" stroke-width=".6"/><path d="M36 181.5l4-6 4 2-3 6z" fill="#58b8c8" stroke="#2a4a6a" stroke-width=".5"/><path d="M37 175.5l6 6" stroke="#e8e8f0" stroke-width=".8"/><path d="M26.500 193.7H34" stroke="#e8e8f2" stroke-width="1"/><circle cx="26.5" cy="193.7" r="2.300" fill="#2a2a3a"/><path d="M23.3 193.7h6.400M26.5 190.5v6.400" stroke="#0a0a10" stroke-width="1.700"/><rect x="34" y="187.7" width="12" height="12" fill="#8e8ca8" stroke="#c0bed4" stroke-width=".6"/><path d="M35 194.7c2-4 6-5 10-4v5c-3 0-6 1-8 3z" fill="#68c0b8" stroke="#3a5a6a" stroke-width=".5"/><path d="M36 196.7c3-3 6-3 9-3" stroke="#d06070" stroke-width="1"/><path d="M15.300 209H23" stroke="#e8e8f2" stroke-width="1"/><circle cx="16" cy="209" r="3" fill="#1c1c24"/><path d="M13.2 209h5.600" stroke="#d8d8e0" stroke-width="1.100"/><ellipse cx="28" cy="206" rx="4" ry="2.5" fill="#f0c838" stroke="#8a6a10" stroke-width=".5"/><path d="M24 210l8-1 2 3-7 2z" fill="#38a8e8" stroke="#1a4a8a" stroke-width=".5"/><circle cx="26" cy="212" r="1.5" fill="#e8e8f8"/><path d="M26.500 224.2H36" stroke="#e8e8f2" stroke-width="1"/><path d="M36 220.2l6-1 2 3v6l-6 1z" fill="#38c8d8" stroke="#1a5a7a" stroke-width=".5"/><path d="M38 219.2l2 8" stroke="#e04858" stroke-width="1.3"/><path d="M36 220.2l2 3" stroke="#f0f0f8" stroke-width=".8"/><path d="M26.500 239.5H34" stroke="#e8e8f2" stroke-width="1"/><circle cx="26.5" cy="239.5" r="3" fill="#1c1c24"/><path d="M23.7 239.5h5.600" stroke="#d8d8e0" stroke-width="1.100"/><path d="M37.5 236.5L39 243.0L44 243.5" stroke="#e88020" stroke-width="2" fill="none" stroke-linejoin="round"/><ellipse cx="37.8" cy="236.0" rx="2.800" ry="2.300" fill="#28b8c8" stroke="#1a3a8a" stroke-width=".7"/><ellipse cx="43.3" cy="241.3" rx="2.800" ry="2.300" fill="#28b8c8" stroke="#1a3a8a" stroke-width=".7"/><path d="M36.5 235.0l2.500 0M42 240.3l2.500 0" stroke="#b8f0f0" stroke-width=".8"/><path d="M37.300 245.5V331" stroke="#e8e8f2" stroke-width="1"/><path d="M37.300 254.7H45" stroke="#e8e8f2" stroke-width="1"/><path d="M45.5 252.7l3-3h6v7l-3 3H45.5z" fill="#e8d878" stroke="#2a200a" stroke-width=".8"/><path d="M51.5 252.7l3-3v7l-3 3z" fill="#38c0b8"/><path d="M45.5 252.7h6v7M51.5 252.7l3-3" stroke="#2a200a" stroke-width=".7" fill="none"/><rect x="47.0" y="253.89999999999998" width="3" height="4.600" fill="#fff8c8" stroke="#5a3a10" stroke-width=".6"/><path d="M47.0 256.2h3" stroke="#5a3a10" stroke-width=".6"/><path d="M48.5 249.7h5.500" stroke="#d8a878" stroke-width="1"/><path d="M37.300 270H45" stroke="#e8e8f2" stroke-width="1"/><path d="M45.5 268l3-3h6v7l-3 3H45.5z" fill="#e8d878" stroke="#2a200a" stroke-width=".8"/><path d="M51.5 268l3-3v7l-3 3z" fill="#38c0b8"/><path d="M45.5 268h6v7M51.5 268l3-3" stroke="#2a200a" stroke-width=".7" fill="none"/><rect x="47.0" y="269.2" width="3" height="4.600" fill="#fff8c8" stroke="#5a3a10" stroke-width=".6"/><path d="M47.0 271.5h3" stroke="#5a3a10" stroke-width=".6"/><path d="M48.5 265h5.500" stroke="#d8a878" stroke-width="1"/><path d="M37.300 285.2H45" stroke="#e8e8f2" stroke-width="1"/><path d="M45.5 283.2l3-3h6v7l-3 3H45.5z" fill="#e8d878" stroke="#2a200a" stroke-width=".8"/><path d="M51.5 283.2l3-3v7l-3 3z" fill="#38c0b8"/><path d="M45.5 283.2h6v7M51.5 283.2l3-3" stroke="#2a200a" stroke-width=".7" fill="none"/><rect x="47.0" y="284.4" width="3" height="4.600" fill="#fff8c8" stroke="#5a3a10" stroke-width=".6"/><path d="M47.0 286.7h3" stroke="#5a3a10" stroke-width=".6"/><path d="M48.5 280.2h5.500" stroke="#d8a878" stroke-width="1"/><path d="M37.300 300.5H45" stroke="#e8e8f2" stroke-width="1"/><path d="M45.5 298.5l3-3h6v7l-3 3H45.5z" fill="#e8d878" stroke="#2a200a" stroke-width=".8"/><path d="M51.5 298.5l3-3v7l-3 3z" fill="#38c0b8"/><path d="M45.5 298.5h6v7M51.5 298.5l3-3" stroke="#2a200a" stroke-width=".7" fill="none"/><rect x="47.0" y="299.7" width="3" height="4.600" fill="#fff8c8" stroke="#5a3a10" stroke-width=".6"/><path d="M47.0 302.0h3" stroke="#5a3a10" stroke-width=".6"/><path d="M48.5 295.5h5.500" stroke="#d8a878" stroke-width="1"/><path d="M37.300 315.7H45" stroke="#e8e8f2" stroke-width="1"/><path d="M45.5 313.7l3-3h6v7l-3 3H45.5z" fill="#e8d878" stroke="#2a200a" stroke-width=".8"/><path d="M51.5 313.7l3-3v7l-3 3z" fill="#38c0b8"/><path d="M45.5 313.7h6v7M51.5 313.7l3-3" stroke="#2a200a" stroke-width=".7" fill="none"/><rect x="47.0" y="314.9" width="3" height="4.600" fill="#fff8c8" stroke="#5a3a10" stroke-width=".6"/><path d="M47.0 317.2h3" stroke="#5a3a10" stroke-width=".6"/><path d="M48.5 310.7h5.500" stroke="#d8a878" stroke-width="1"/><path d="M37.300 331H45" stroke="#e8e8f2" stroke-width="1"/><path d="M45.5 329l3-3h6v7l-3 3H45.5z" fill="#e8d878" stroke="#2a200a" stroke-width=".8"/><path d="M51.5 329l3-3v7l-3 3z" fill="#38c0b8"/><path d="M45.5 329h6v7M51.5 329l3-3" stroke="#2a200a" stroke-width=".7" fill="none"/><rect x="47.0" y="330.2" width="3" height="4.600" fill="#fff8c8" stroke="#5a3a10" stroke-width=".6"/><path d="M47.0 332.5h3" stroke="#5a3a10" stroke-width=".6"/><path d="M48.5 326h5.500" stroke="#d8a878" stroke-width="1"/><circle cx="26.5" cy="346.2" r="2.300" fill="#2a2a3a"/><path d="M23.3 346.2h6.400M26.5 343.0v6.400" stroke="#0a0a10" stroke-width="1.700"/><path d="M37.5 343.2L39 349.7L44 350.2" stroke="#e88020" stroke-width="2" fill="none" stroke-linejoin="round"/><ellipse cx="37.8" cy="342.7" rx="2.800" ry="2.300" fill="#28b8c8" stroke="#1a3a8a" stroke-width=".7"/><ellipse cx="43.3" cy="348.0" rx="2.800" ry="2.300" fill="#28b8c8" stroke="#1a3a8a" stroke-width=".7"/><path d="M36.5 341.7l2.500 0M42 347.0l2.500 0" stroke="#b8f0f0" stroke-width=".8"/><circle cx="26.5" cy="361.5" r="2.300" fill="#2a2a3a"/><path d="M23.3 361.5h6.400M26.5 358.3v6.400" stroke="#0a0a10" stroke-width="1.700"/><path d="M37.5 358.5L39 365.0L44 365.5" stroke="#e88020" stroke-width="2" fill="none" stroke-linejoin="round"/><ellipse cx="37.8" cy="358.0" rx="2.800" ry="2.300" fill="#28b8c8" stroke="#1a3a8a" stroke-width=".7"/><ellipse cx="43.3" cy="363.3" rx="2.800" ry="2.300" fill="#28b8c8" stroke="#1a3a8a" stroke-width=".7"/><path d="M36.5 357.0l2.500 0M42 362.3l2.500 0" stroke="#b8f0f0" stroke-width=".8"/><circle cx="26.5" cy="376.7" r="2.300" fill="#2a2a3a"/><path d="M23.3 376.7h6.400M26.5 373.5v6.400" stroke="#0a0a10" stroke-width="1.700"/><path d="M37.5 373.7L39 380.2L44 380.7" stroke="#e88020" stroke-width="2" fill="none" stroke-linejoin="round"/><ellipse cx="37.8" cy="373.2" rx="2.800" ry="2.300" fill="#28b8c8" stroke="#1a3a8a" stroke-width=".7"/><ellipse cx="43.3" cy="378.5" rx="2.800" ry="2.300" fill="#28b8c8" stroke="#1a3a8a" stroke-width=".7"/><path d="M36.5 372.2l2.500 0M42 377.5l2.500 0" stroke="#b8f0f0" stroke-width=".8"/><circle cx="26.5" cy="392" r="2.300" fill="#2a2a3a"/><path d="M23.3 392h6.400M26.5 388.8v6.400" stroke="#0a0a10" stroke-width="1.700"/><path d="M37.5 389L39 395.5L44 396" stroke="#e88020" stroke-width="2" fill="none" stroke-linejoin="round"/><ellipse cx="37.8" cy="388.5" rx="2.800" ry="2.300" fill="#28b8c8" stroke="#1a3a8a" stroke-width=".7"/><ellipse cx="43.3" cy="393.8" rx="2.800" ry="2.300" fill="#28b8c8" stroke="#1a3a8a" stroke-width=".7"/><path d="M36.5 387.5l2.500 0M42 392.8l2.500 0" stroke="#b8f0f0" stroke-width=".8"/><circle cx="26.5" cy="407.2" r="2.300" fill="#2a2a3a"/><path d="M23.3 407.2h6.400M26.5 404.0v6.400" stroke="#0a0a10" stroke-width="1.700"/><path d="M37.5 404.2L39 410.7L44 411.2" stroke="#e88020" stroke-width="2" fill="none" stroke-linejoin="round"/><ellipse cx="37.8" cy="403.7" rx="2.800" ry="2.300" fill="#28b8c8" stroke="#1a3a8a" stroke-width=".7"/><ellipse cx="43.3" cy="409.0" rx="2.800" ry="2.300" fill="#28b8c8" stroke="#1a3a8a" stroke-width=".7"/><path d="M36.5 402.7l2.500 0M42 408.0l2.500 0" stroke="#b8f0f0" stroke-width=".8"/><circle cx="26.5" cy="422.5" r="2.300" fill="#2a2a3a"/><path d="M23.3 422.5h6.400M26.5 419.3v6.400" stroke="#0a0a10" stroke-width="1.700"/><path d="M37.5 419.5L39 426.0L44 426.5" stroke="#e88020" stroke-width="2" fill="none" stroke-linejoin="round"/><ellipse cx="37.8" cy="419.0" rx="2.800" ry="2.300" fill="#28b8c8" stroke="#1a3a8a" stroke-width=".7"/><ellipse cx="43.3" cy="424.3" rx="2.800" ry="2.300" fill="#28b8c8" stroke="#1a3a8a" stroke-width=".7"/><path d="M36.5 418.0l2.500 0M42 423.3l2.500 0" stroke="#b8f0f0" stroke-width=".8"/><path d="M37.5 434.5L39 441.0L44 441.5" stroke="#e88020" stroke-width="2" fill="none" stroke-linejoin="round"/><ellipse cx="37.8" cy="434.0" rx="2.800" ry="2.300" fill="#28b8c8" stroke="#1a3a8a" stroke-width=".7"/><ellipse cx="43.3" cy="439.3" rx="2.800" ry="2.300" fill="#28b8c8" stroke="#1a3a8a" stroke-width=".7"/><path d="M36.5 433.0l2.500 0M42 438.3l2.500 0" stroke="#b8f0f0" stroke-width=".8"/></svg><div class="tr" style="left:48px;top:50.5px;"><span>Trim.13</span></div><div class="tr" style="left:58.5px;top:65.7px;"><span>Body.12</span></div><div class="tr" style="left:48px;top:81px;"><span>Trim.14</span></div><div class="tr" style="left:58.5px;top:96.2px;"><span>Body.16</span></div><div class="tr" style="left:48px;top:111.5px;"><span>Trim.15</span></div><div class="tr" style="left:58.5px;top:126.69999999999999px;"><span>Body.20</span></div><div class="tr" style="left:48px;top:142px;"><span>Trim.18</span></div><div class="tr" style="left:58.5px;top:157.2px;"><span>Body.54</span></div><div class="tr" style="left:48px;top:172.5px;"><span>Split.12</span></div><div class="tr" style="left:48px;top:187.7px;"><span>EdgeFillet.12</span></div><div class="tr" style="left:37.5px;top:203px;text-decoration:underline;"><span>Geometrical Set.43</span></div><div class="tr" style="left:48px;top:218.2px;"><span>Extract.9</span></div><div class="tr sel" style="left:48px;top:233.5px;"><span>MAIN PARING LINE</span></div><div class="tr sel" style="left:60px;top:248.7px;"><span>'Distance threshold'</span></div><div class="tr sel" style="left:60px;top:264px;"><span>'Angular threshold'</span></div><div class="tr sel" style="left:60px;top:279.2px;"><span>'Distance threshold'</span></div><div class="tr sel" style="left:60px;top:294.5px;"><span>'Angular threshold'</span></div><div class="tr sel" style="left:60px;top:309.7px;"><span>'Distance threshold'</span></div><div class="tr sel" style="left:60px;top:325px;"><span>'Angular threshold'</span></div><div class="tr sel" style="left:48px;top:340.2px;"><span>Multiple Extract.7</span></div><div class="tr sel" style="left:48px;top:355.5px;"><span>Multiple Extract.8</span></div><div class="tr sel" style="left:48px;top:370.7px;"><span>Multiple Extract.9</span></div><div class="tr sel" style="left:48px;top:386px;"><span>Multiple Extract.10</span></div><div class="tr sel" style="left:48px;top:401.2px;"><span>Multiple Extract.11</span></div><div class="tr sel" style="left:48px;top:416.5px;"><span>Multiple Extract.12</span></div>
<div class="ft" style="left:795.5px;top:46px;width:19.5px;height:88.5px"><div class="hd">P</div><div class="x">×</div><div class="sep" style="left:3px;top:21px;width:8px;height:1px"></div><svg style="position:absolute;left:2.25px;top:27px;" width="14" height="14" viewBox="0 0 14 14"><rect x="2.500" y="4" width="8" height="8" fill="#d2d0e2" stroke="#9a98b2" stroke-width=".9"/><path d="M2.500 4l2-2.500h8v8l-2 2.500M10.500 4l2-2.500" stroke="#a6a4bc" stroke-width=".7" fill="none"/><path d="M3.500 5.500h5M3.500 5.500v5" stroke="#f0eff6" stroke-width="1"/><path d="M5.500 8h3.500v3" stroke="#a09eb8" stroke-width=".9" fill="none"/></svg><svg style="position:absolute;left:2.25px;top:42.5px;" width="14" height="14" viewBox="0 0 14 14"><rect x="2.500" y="4" width="8" height="8" fill="#d2d0e2" stroke="#9a98b2" stroke-width=".9"/><path d="M2.500 4l2-2.500h8v8l-2 2.500M10.500 4l2-2.500" stroke="#a6a4bc" stroke-width=".7" fill="none"/><path d="M3.500 5.500h5M3.500 5.500v5" stroke="#f0eff6" stroke-width="1"/><path d="M5.500 8h3.500v3" stroke="#a09eb8" stroke-width=".9" fill="none"/></svg><svg style="position:absolute;left:2.25px;top:58.5px;" width="14" height="14" viewBox="0 0 14 14"><rect x="2.500" y="4" width="8" height="8" fill="#d2d0e2" stroke="#9a98b2" stroke-width=".9"/><path d="M2.500 4l2-2.500h8v8l-2 2.500M10.500 4l2-2.500" stroke="#a6a4bc" stroke-width=".7" fill="none"/><path d="M3.500 5.500h5M3.500 5.500v5" stroke="#f0eff6" stroke-width="1"/><path d="M5.500 8h3.500v3" stroke="#a09eb8" stroke-width=".9" fill="none"/></svg><svg style="position:absolute;left:2.25px;top:73.5px;" width="14" height="14" viewBox="0 0 14 14"><rect x="2.500" y="4" width="8" height="8" fill="#d2d0e2" stroke="#9a98b2" stroke-width=".9"/><path d="M2.500 4l2-2.500h8v8l-2 2.500M10.500 4l2-2.500" stroke="#a6a4bc" stroke-width=".7" fill="none"/><path d="M3.500 5.500h5M3.500 5.500v5" stroke="#f0eff6" stroke-width="1"/><path d="M5.500 8h3.500v3" stroke="#a09eb8" stroke-width=".9" fill="none"/></svg></div><div class="ft" style="left:840px;top:102px;width:18.5px;height:39px"><div class="hd">U</div><div class="x">×</div><div class="sep" style="left:3px;top:21px;width:8px;height:1px"></div></div><svg style="position:absolute;left:852px;top:128px;" width="7" height="12" viewBox="0 0 7 12"><path d="M1 11L5 1" stroke="#e8e050" stroke-width="1.300"/><path d="M2 3l4 8" stroke="#2a4ad8" stroke-width="1"/></svg><div class="ft" style="left:831px;top:114.5px;width:21.5px;height:124.5px"><div class="hd">S</div><div class="x">×</div><div class="sep" style="left:3px;top:21px;width:8px;height:1px"></div><svg style="position:absolute;left:3.25px;top:23px;" width="14" height="14" viewBox="0 0 14 14"><path d="M1 11l4-4 8 1-4 5z" fill="#3ac0e0" stroke="#1a4a8a" stroke-width=".5"/><path d="M6 9V3" stroke="#c03040" stroke-width="1"/><path d="M4 4l3-3 3 2-3 3z" fill="#f0c040" stroke="#805010" stroke-width=".4"/><path d="M7 9l5-6" stroke="#e8e040" stroke-width=".9"/></svg><svg style="position:absolute;left:3.25px;top:42px;" width="14" height="14" viewBox="0 0 14 14"><path d="M2 6c2-4 8-4 10 0-1 3-3 2-5 2s-4 1-5-2z" fill="#38cce2" stroke="#1a3a9a" stroke-width=".6"/><path d="M4 9c1-2 5-2 6 0" stroke="#e8d040" stroke-width="1.200" fill="none"/><path d="M3 12l8-2" stroke="#c04050" stroke-width="1"/></svg><svg style="position:absolute;left:3.25px;top:60px;" width="14" height="14" viewBox="0 0 14 14"><path d="M2 3c3 0 5 2 6 5l5 1c-1-4-4-7-8-8z" fill="#38cce2" stroke="#1a3a9a" stroke-width=".6"/><path d="M2 3l-1 3c3 0 5 2 6 5l1-3" fill="#2a6ad8" stroke="#1a3a9a" stroke-width=".5"/><path d="M8 8l5 1-1 3-5-1z" fill="#e8d850"/></svg><svg style="position:absolute;left:3.25px;top:78px;" width="14" height="14" viewBox="0 0 14 14"><path d="M1 8l6-5 6 5-6 2z" fill="#e8d850" stroke="#6a5a10" stroke-width=".5"/><path d="M1 11l6-5 6 5-6 2z" fill="#40d6e4" stroke="#1a3a9a" stroke-width=".6"/></svg><svg style="position:absolute;left:3.25px;top:95px;" width="14" height="14" viewBox="0 0 14 14"><path d="M2 9c0-5 4-7 7-6 3 1 3 5 1 7-2 2-8 3-8-1z" fill="#40d6e4" stroke="#1a3a9a" stroke-width=".6"/><path d="M4 8c1-2 3-3 5-2" stroke="#e8d850" stroke-width="1.300" fill="none"/><path d="M5 11c2 0 4-1 5-3" stroke="#2a8a4a" stroke-width="1" fill="none"/></svg><svg style="position:absolute;left:3.25px;top:110px;" width="14" height="14" viewBox="0 0 14 14"><path d="M1 4l8-2 4 3-8 2z" fill="#40d6e4" stroke="#1a3a9a" stroke-width=".5"/><path d="M1 7l8-2 4 3-8 2z" fill="#e8d850" stroke="#6a5a10" stroke-width=".5"/><path d="M1 10l8-2 4 3-8 2z" fill="#2a7ad8" stroke="#1a3a9a" stroke-width=".5"/></svg><svg style="position:absolute;left:16.5px;top:36px;" width="4" height="3" viewBox="0 0 4 3"><path d="M0 0h4L2 2.600z" fill="#111"/></svg><svg style="position:absolute;left:16.5px;top:55px;" width="4" height="3" viewBox="0 0 4 3"><path d="M0 0h4L2 2.600z" fill="#111"/></svg><svg style="position:absolute;left:16.5px;top:73px;" width="4" height="3" viewBox="0 0 4 3"><path d="M0 0h4L2 2.600z" fill="#111"/></svg></div><div class="ft" style="left:772px;top:177px;width:21.5px;height:168px"><div class="hd">V</div><div class="x">×</div><div class="sep" style="left:3px;top:21px;width:8px;height:1px"></div><div class="sep" style="left:3px;top:80px;width:15.5px;height:1px"></div><div class="sep" style="left:3px;top:134px;width:15.5px;height:1px"></div><svg style="position:absolute;left:3.25px;top:26px;" width="14" height="14" viewBox="0 0 14 14"><circle cx="6" cy="7" r="1.500" fill="#1a2a6a"/></svg><svg style="position:absolute;left:3.25px;top:44px;" width="14" height="14" viewBox="0 0 14 14"><path d="M1 12L12 2" stroke="#1a3a8a" stroke-width="1.200"/></svg><svg style="position:absolute;left:3.25px;top:61px;" width="14" height="14" viewBox="0 0 14 14"><path d="M1 10l5-6h7l-5 6z" fill="#f0d850" stroke="#4a4a2a" stroke-width=".7"/></svg><svg style="position:absolute;left:3.25px;top:82px;" width="14" height="14" viewBox="0 0 14 14"><path d="M2 2c3 2 6 2 10 0l-1 4c-3 1-6 1-8 0z" fill="#38cce2" stroke="#1a3a9a" stroke-width=".5"/><path d="M3 8c2 2 6 2 9 0l1 3c-4 2-8 2-11 0z" fill="#2a8ae0" stroke="#1a3a9a" stroke-width=".5"/><path d="M5 4l2 5" stroke="#e8e050" stroke-width="1"/></svg><svg style="position:absolute;left:3.25px;top:98px;" width="14" height="14" viewBox="0 0 14 14"><path d="M1 5l6-3 6 3-6 3z" fill="#40d6e4" stroke="#1a3a9a" stroke-width=".5"/><path d="M4 2l6 2v9l-6-2z" fill="#2a6ad8" stroke="#1a2a8a" stroke-width=".5"/><path d="M4 6l6 2" stroke="#e8e050" stroke-width="1"/></svg><svg style="position:absolute;left:3.25px;top:114px;" width="14" height="14" viewBox="0 0 14 14"><path d="M2 10c2-5 6-8 11-8l-2 4c-3 0-5 2-6 6z" fill="#38cce2" stroke="#1a3a9a" stroke-width=".5"/><path d="M3 6l6 5" stroke="#2a4ad8" stroke-width="1.200"/></svg><svg style="position:absolute;left:3.25px;top:138px;" width="14" height="14" viewBox="0 0 14 14"><circle cx="7" cy="7" r="5" fill="#c8d8f0" fill-opacity=".5" stroke="#2a5a9a" stroke-width="1.100"/></svg><svg style="position:absolute;left:3.25px;top:155px;" width="14" height="14" viewBox="0 0 14 14"><path d="M2 4l7-3 4 4-2 6-6 2-4-4z" fill="#f0d890" stroke="#6a4a1a" stroke-width=".6"/><path d="M5 8c2-3 5-3 7 0" stroke="#2a4ad8" stroke-width="1.200" fill="none"/><path d="M8 9l5 4" stroke="#111" stroke-width="1"/></svg><svg style="position:absolute;left:16.5px;top:36px;" width="4" height="3" viewBox="0 0 4 3"><path d="M0 0h4L2 2.600z" fill="#111"/></svg><svg style="position:absolute;left:16.5px;top:53px;" width="4" height="3" viewBox="0 0 4 3"><path d="M0 0h4L2 2.600z" fill="#111"/></svg><svg style="position:absolute;left:16.5px;top:70px;" width="4" height="3" viewBox="0 0 4 3"><path d="M0 0h4L2 2.600z" fill="#111"/></svg><svg style="position:absolute;left:16.5px;top:94px;" width="4" height="3" viewBox="0 0 4 3"><path d="M0 0h4L2 2.600z" fill="#111"/></svg><svg style="position:absolute;left:16.5px;top:111px;" width="4" height="3" viewBox="0 0 4 3"><path d="M0 0h4L2 2.600z" fill="#111"/></svg><svg style="position:absolute;left:16.5px;top:127px;" width="4" height="3" viewBox="0 0 4 3"><path d="M0 0h4L2 2.600z" fill="#111"/></svg><svg style="position:absolute;left:16.5px;top:164.5px;" width="4" height="3" viewBox="0 0 4 3"><path d="M0 0h4L2 2.600z" fill="#111"/></svg></div><div class="ft" style="left:794px;top:329px;width:19.5px;height:88.5px"><div class="hd"></div><div class="x">×</div><div class="sep" style="left:3px;top:21px;width:8px;height:1px"></div><svg style="position:absolute;left:2.25px;top:24px;" width="14" height="14" viewBox="0 0 14 14"><path d="M1 9l6-4 6 4-6 4z" fill="#38cce2" stroke="#1a3a9a" stroke-width=".5"/><path d="M4 7l3-5 3 5z" fill="#f0d040" stroke="#6a5010" stroke-width=".5"/><circle cx="7" cy="2" r="1" fill="#111"/></svg><svg style="position:absolute;left:2.25px;top:41px;" width="14" height="14" viewBox="0 0 14 14"><path d="M1 9l5-6 7 2-5 7z" fill="#38cce2" stroke="#1a3a9a" stroke-width=".5"/><path d="M2 4l10 7M4 11l7-8" stroke="#2a6a3a" stroke-width="1"/></svg><svg style="position:absolute;left:2.25px;top:58px;" width="14" height="14" viewBox="0 0 14 14"><path d="M2 5l6-3 4 4-6 3z" fill="#f0d040" stroke="#6a5010" stroke-width=".5"/><path d="M2 8l6-3 5 4-6 4z" fill="#38cce2" stroke="#1a3a9a" stroke-width=".5"/><path d="M9 3l3 3" stroke="#c03040" stroke-width="1"/></svg><svg style="position:absolute;left:2.25px;top:73px;" width="14" height="14" viewBox="0 0 14 14"><path d="M1 6l6-4 6 4-6 3z" fill="#2a7ad8" stroke="#1a2a8a" stroke-width=".5"/><path d="M2 10l5-3 5 3-5 3z" fill="#40d6e4" stroke="#1a3a9a" stroke-width=".5"/><path d="M3 3l8 8" stroke="#2a8a4a" stroke-width="1"/></svg></div><div class="ft" style="left:824px;top:315px;width:10px;height:74px"><div class="hd">[</div><div class="sep" style="left:3px;top:21px;width:8px;height:1px"></div></div><svg style="position:absolute;left:826px;top:345px;" width="6" height="40" viewBox="0 0 6 40"><path d="M1 2l4 3-4 3z" fill="#3a6ad8"/><path d="M1 12l4 3-4 3z" fill="#38cce2"/><path d="M1 22l4 3-4 3z" fill="#3a6ad8"/><path d="M1 32l4 3-4 3z" fill="#38cce2"/></svg><div class="ft" style="left:832.5px;top:289px;width:21px;height:107px"><div class="hd">B</div><div class="x">×</div><div class="sep" style="left:3px;top:21px;width:8px;height:1px"></div><svg style="position:absolute;left:3.0px;top:24px;" width="14" height="14" viewBox="0 0 14 14"><path d="M2 10l4-8 6 3-1 6z" fill="#38cce2" stroke="#1a3a9a" stroke-width=".6"/><path d="M6 2l6 3-4 3z" fill="#f0d040" stroke="#6a5010" stroke-width=".4"/></svg><svg style="position:absolute;left:3.0px;top:41px;" width="14" height="14" viewBox="0 0 14 14"><path d="M1 7l6-5 6 3-6 6z" fill="#40d6e4" stroke="#1a3a9a" stroke-width=".6"/><path d="M4 9l6-6" stroke="#e8e050" stroke-width="1.200"/><path d="M3 4l8 6" stroke="#1a3a9a" stroke-width=".6"/></svg><svg style="position:absolute;left:3.0px;top:58px;" width="14" height="14" viewBox="0 0 14 14"><rect x="1.500" y="1.500" width="11" height="11" fill="#e8e8d0" stroke="#111" stroke-width="1.600"/><circle cx="7" cy="7" r="2.600" fill="#c8c8a0" stroke="#111" stroke-width="1"/></svg><svg style="position:absolute;left:3.0px;top:75px;" width="14" height="14" viewBox="0 0 14 14"><path d="M1 11l5-8 7 4-3 6z" fill="#38cce2" stroke="#1a3a9a" stroke-width=".6"/><path d="M6 3l3-2 4 6" fill="#f0d040" stroke="#6a5010" stroke-width=".4"/><path d="M3 8l7 3" stroke="#2a8a4a" stroke-width=".8"/></svg><svg style="position:absolute;left:3.0px;top:91px;" width="14" height="14" viewBox="0 0 14 14"><path d="M1 4l8-2 4 6-4 5-8-2z" fill="#40d6e4" stroke="#1a3a9a" stroke-width=".6"/><path d="M4 5l5 0 1 5-5 0z" fill="#2a4ad8"/><path d="M2 12l10-9" stroke="#e8e050" stroke-width=".9"/></svg><svg style="position:absolute;left:16px;top:70px;" width="4" height="3" viewBox="0 0 4 3"><path d="M0 0h4L2 2.600z" fill="#111"/></svg></div>
<div style="position:absolute;left:859px;top:46px;width:21px;height:387px;background:#c5c3da;border-left:1.5px solid #dddcea"></div><div style="position:absolute;left:862px;top:50px;width:12px;height:1px;background:#a5a4be"></div><svg style="position:absolute;left:863px;top:55.0px;" width="13.5" height="13.5" viewBox="0 0 14 14"><path d="M1 6l5-4 7 3-2 6-7 2z" fill="#8a8a92" stroke="#333" stroke-width=".6"/><path d="M3 6l3-2 3 1-2 3z" fill="#f4f4f8"/><path d="M8 8l3-1 1 3-3 2z" fill="#f4f4f8"/><path d="M1 9l4 4 8-3" stroke="#e89030" stroke-width="1.800" fill="none"/></svg><svg style="position:absolute;left:863px;top:83.5px;" width="13.5" height="13.5" viewBox="0 0 14 14"><path d="M3 1l8 7-4 .5 2 4-2 1-2-4-2 3z" fill="#f0a050" stroke="#c06010" stroke-width=".7"/></svg><svg style="position:absolute;left:863px;top:100.5px;" width="13.5" height="13.5" viewBox="0 0 14 14"><path d="M7 7L2 2M7 7l5-5M7 7l-5 5M7 7l5 5" stroke="#111" stroke-width="1.300"/><circle cx="7" cy="7" r="2" fill="#2a8a4a"/><circle cx="3" cy="3" r="1.300" fill="#e8e050"/><circle cx="11" cy="11" r="1.300" fill="#3a6ad8"/></svg><svg style="position:absolute;left:863px;top:125.5px;" width="13.5" height="13.5" viewBox="0 0 14 14"><rect x="1" y="3" width="10" height="10" fill="#f4f4f8" stroke="#222" stroke-width="1"/><path d="M4 10l7-9 2 1-7 9z" fill="#3a6ad8" stroke="#1a2a6a" stroke-width=".4"/><path d="M3 11l3-1" stroke="#111" stroke-width=".8"/></svg><svg style="position:absolute;left:863px;top:152.5px;" width="13.5" height="13.5" viewBox="0 0 14 14"><rect x="1" y="1" width="12" height="12" fill="#2a5ad8" stroke="#1a1a7a" stroke-width=".6"/><rect x="2.500" y="2.500" width="4" height="4" fill="#3ad8e8"/><rect x="7.500" y="2.500" width="4" height="4" fill="#8ae8f8"/><rect x="2.500" y="7.500" width="4" height="4" fill="#8ae8f8"/><rect x="7.500" y="7.500" width="4" height="4" fill="#3ad8e8"/></svg><svg style="position:absolute;left:863px;top:170.5px;" width="13.5" height="13.5" viewBox="0 0 14 14"><path d="M1 4l9-2 3 4-6 7z" fill="#40d6e4" stroke="#1a3a9a" stroke-width=".6"/><path d="M3 5l7-1.500-4 6z" fill="#e8f4ff"/><path d="M6 13l7-7" stroke="#1a3a9a" stroke-width="1"/></svg><svg style="position:absolute;left:863px;top:188.0px;" width="13.5" height="13.5" viewBox="0 0 14 14"><circle cx="5" cy="5" r="3.500" fill="#38cce2" stroke="#1a3a9a" stroke-width=".6"/><circle cx="9.500" cy="8.500" r="3" fill="#e89040" stroke="#8a4a10" stroke-width=".5"/><path d="M2 11l10 1" stroke="#2a4ad8" stroke-width="1.300"/><circle cx="5" cy="5" r="1.200" fill="#f4f4f8"/></svg><svg style="position:absolute;left:863px;top:205.0px;" width="13.5" height="13.5" viewBox="0 0 14 14"><path d="M2 8c1-5 6-7 10-5l-2 3c-2-1-5 0-6 3z" fill="#f0b050" stroke="#8a5010" stroke-width=".6"/><path d="M4 11c1-3 4-4 7-3" stroke="#e8d850" stroke-width="1.200" fill="none"/></svg><svg style="position:absolute;left:863px;top:223.0px;" width="13.5" height="13.5" viewBox="0 0 14 14"><path d="M2 12V5l3-3v7zM9 12V5l3-3v7z" fill="#40d6e4" stroke="#1a3a9a" stroke-width=".6"/><path d="M5 8h4" stroke="#2a4ad8" stroke-width="1"/></svg><svg style="position:absolute;left:863px;top:239.5px;" width="13.5" height="13.5" viewBox="0 0 14 14"><path d="M1 8l6-6 6 4-6 6z" fill="#40d6e4" stroke="#1a3a9a" stroke-width=".6"/><path d="M4 8l3-3 3 2-3 3z" fill="#e8d850"/></svg><svg style="position:absolute;left:863px;top:266.5px;" width="13.5" height="13.5" viewBox="0 0 14 14"><path d="M3 3a4 4 0 0 1 8 0v4h-2.500V3.500a1.500 1.500 0 0 0-3 0V7H3z" fill="#3a6ad8" stroke="#1a2a8a" stroke-width=".5"/><rect x="3" y="6" width="2.500" height="2" fill="#c8c8d8"/><rect x="8.500" y="6" width="2.500" height="2" fill="#c8c8d8"/><path d="M9 10l4 3" stroke="#e89030" stroke-width="1.200"/></svg><svg style="position:absolute;left:863px;top:285.0px;" width="13.5" height="13.5" viewBox="0 0 14 14"><circle cx="2.5" cy="2.5" r="1.500" fill="#1a1a9a"/><circle cx="2.5" cy="7.0" r="1.500" fill="#1a1a9a"/><circle cx="2.5" cy="11.5" r="1.500" fill="#1a1a9a"/><circle cx="7.0" cy="2.5" r="1.500" fill="#1a1a9a"/><circle cx="7.0" cy="7.0" r="1.500" fill="#1a1a9a"/><circle cx="7.0" cy="11.5" r="1.500" fill="#1a1a9a"/><circle cx="11.5" cy="2.5" r="1.500" fill="#1a1a9a"/><circle cx="11.5" cy="7.0" r="1.500" fill="#1a1a9a"/><circle cx="11.5" cy="11.5" r="1.500" fill="#1a1a9a"/></svg><svg style="position:absolute;left:863px;top:303.5px;" width="13.5" height="13.5" viewBox="0 0 14 14"><path d="M1 5l4-3h8v8l-4 3H1z" fill="#d8c850" stroke="#3a3a1a" stroke-width=".7"/><rect x="3" y="6" width="5" height="4" fill="#f4f4e0" stroke="#3a3a1a" stroke-width=".5"/><path d="M5 2l2-1.500 3 .5" stroke="#2a8a4a" stroke-width="1" fill="none"/></svg><svg style="position:absolute;left:863px;top:319.5px;" width="13.5" height="13.5" viewBox="0 0 14 14"><path d="M1 6l4-3h8v7l-4 3H1z" fill="#d8c850" stroke="#3a3a1a" stroke-width=".7"/><path d="M3 10l7-6" stroke="#1a1a5a" stroke-width="1.200"/><path d="M4 3l3-2 3 1" stroke="#2a4ad8" stroke-width="1" fill="none"/></svg><svg style="position:absolute;left:863px;top:336.5px;" width="13.5" height="13.5" viewBox="0 0 14 14"><path d="M1 6l4-3h8v7l-4 3H1z" fill="#d8c850" stroke="#3a3a1a" stroke-width=".7"/><rect x="4" y="7" width="4" height="3" fill="#f4f4e0" stroke="#3a3a1a" stroke-width=".5"/><path d="M6 1v4M4 3h4" stroke="#2a2a2a" stroke-width=".8"/></svg><svg style="position:absolute;left:863px;top:362.5px;" width="13.5" height="13.5" viewBox="0 0 14 14"><path d="M2 3l4 1 6 8-2 1-6-7z" fill="#8a7a6a" stroke="#3a2a1a" stroke-width=".6"/><path d="M2 3l3-1 2 2-2 2z" fill="#e8a050"/><path d="M8 2l4 3" stroke="#c8c8d8" stroke-width="1.500"/></svg><div style="position:absolute;left:862px;top:77px;width:13px;height:1px;background:#a5a4be"></div><div style="position:absolute;left:862px;top:120px;width:13px;height:1px;background:#a5a4be"></div><div style="position:absolute;left:862px;top:146px;width:13px;height:1px;background:#a5a4be"></div><div style="position:absolute;left:862px;top:262px;width:13px;height:1px;background:#a5a4be"></div><div style="position:absolute;left:862px;top:356px;width:13px;height:1px;background:#a5a4be"></div><svg style="position:absolute;left:875.5px;top:95px;" width="4" height="3" viewBox="0 0 4 3"><path d="M0 0h4L2 2.600z" fill="#111"/></svg><svg style="position:absolute;left:875.5px;top:112px;" width="4" height="3" viewBox="0 0 4 3"><path d="M0 0h4L2 2.600z" fill="#111"/></svg><svg style="position:absolute;left:875.5px;top:138px;" width="4" height="3" viewBox="0 0 4 3"><path d="M0 0h4L2 2.600z" fill="#111"/></svg><svg style="position:absolute;left:875.5px;top:165px;" width="4" height="3" viewBox="0 0 4 3"><path d="M0 0h4L2 2.600z" fill="#111"/></svg><svg style="position:absolute;left:875.5px;top:182px;" width="4" height="3" viewBox="0 0 4 3"><path d="M0 0h4L2 2.600z" fill="#111"/></svg><svg style="position:absolute;left:875.5px;top:199px;" width="4" height="3" viewBox="0 0 4 3"><path d="M0 0h4L2 2.600z" fill="#111"/></svg><svg style="position:absolute;left:875.5px;top:217px;" width="4" height="3" viewBox="0 0 4 3"><path d="M0 0h4L2 2.600z" fill="#111"/></svg><svg style="position:absolute;left:875.5px;top:234px;" width="4" height="3" viewBox="0 0 4 3"><path d="M0 0h4L2 2.600z" fill="#111"/></svg><svg style="position:absolute;left:875.5px;top:252px;" width="4" height="3" viewBox="0 0 4 3"><path d="M0 0h4L2 2.600z" fill="#111"/></svg><svg style="position:absolute;left:875.5px;top:297px;" width="4" height="3" viewBox="0 0 4 3"><path d="M0 0h4L2 2.600z" fill="#111"/></svg><svg style="position:absolute;left:875.5px;top:314px;" width="4" height="3" viewBox="0 0 4 3"><path d="M0 0h4L2 2.600z" fill="#111"/></svg><svg style="position:absolute;left:875.5px;top:331px;" width="4" height="3" viewBox="0 0 4 3"><path d="M0 0h4L2 2.600z" fill="#111"/></svg><svg style="position:absolute;left:875.5px;top:349px;" width="4" height="3" viewBox="0 0 4 3"><path d="M0 0h4L2 2.600z" fill="#111"/></svg>
</div></div>
<div id="btb" class="abs"></div>
<div id="sb" class="abs"><div class="abs t">Select an object or a command</div><div style="position:absolute;left:669.5px;top:1px;width:66px;height:11px;background:#ecebf2"></div></div>
<div id="blk" class="abs"><div style="position:absolute;left:20px;top:3.5px;width:4.5px;height:1px;background:#8a2020"></div></div>
<div style="position:absolute;left:497px;top:29px;width:1px;height:13px;background:#a5a4be"></div><div style="position:absolute;left:498px;top:29px;width:1px;height:13px;background:#e8e7f4"></div><svg style="position:absolute;left:503.5px;top:29.5px;" width="13" height="13" viewBox="0 0 14 14"><rect x="1" y="1" width="11" height="12" fill="#15155a" stroke="#0a0a30" stroke-width=".6"/><path d="M4 4h6v6H6l-2 2z" fill="#f4f4f0"/><path d="M4 8l3-4v5l-3 3z" fill="#f0e040"/></svg><svg style="position:absolute;left:521.0px;top:29.5px;" width="13" height="13" viewBox="0 0 14 14"><rect x="1.500" y="1.500" width="11" height="11" fill="none" stroke="#9c9ab2" stroke-width="1"/><rect x="4" y="4" width="6" height="6" fill="#adabc2" stroke="#9c9ab2" stroke-width=".5"/></svg><svg style="position:absolute;left:538.0px;top:29.5px;" width="13" height="13" viewBox="0 0 14 14"><ellipse cx="4" cy="7" rx="3" ry="5" fill="#15154a" stroke="#0a0a30" stroke-width=".5"/><ellipse cx="10" cy="7" rx="3" ry="5" fill="#15154a" stroke="#0a0a30" stroke-width=".5"/><ellipse cx="4.500" cy="6.500" rx="1.500" ry="3" fill="#3ad0e0"/><ellipse cx="10.500" cy="6.500" rx="1.500" ry="3" fill="#8a8a40"/><rect x="6" y="3" width="2" height="6" fill="#3a3a6a"/></svg><svg style="position:absolute;left:554.0px;top:29.5px;" width="13" height="13" viewBox="0 0 14 14"><rect x="1" y="3" width="11" height="8" fill="#adabc2" stroke="#9c9ab2"/><path d="M3 6h5" stroke="#d8d7e8" stroke-width="1.500"/></svg><svg style="position:absolute;left:569.5px;top:29.5px;" width="13" height="13" viewBox="0 0 14 14"><rect x="1" y="2" width="11" height="10" fill="#adabc2" stroke="#9c9ab2"/><circle cx="6.500" cy="7" r="2.500" fill="#d0cfe2" stroke="#9c9ab2" stroke-width=".6"/></svg><svg style="position:absolute;left:586.0px;top:29.5px;" width="13" height="13" viewBox="0 0 14 14"><path d="M1 11l5-6h7l-5 6z" fill="#f8f8e8" stroke="#111" stroke-width=".9"/><path d="M5 6l4-4 2 1-3 4z" fill="#e8d860" stroke="#222" stroke-width=".6"/><path d="M1 11v2h7v-2" fill="#d8d8c0" stroke="#111" stroke-width=".6"/></svg><svg style="position:absolute;left:602.0px;top:29.5px;" width="13" height="13" viewBox="0 0 14 14"><path d="M2 12c0-6 3-9 9-10v3c-4 1-6 3-6 7z" fill="#adabc2" stroke="#9c9ab2" stroke-width=".8"/></svg><svg style="position:absolute;left:618.5px;top:29.5px;" width="13" height="13" viewBox="0 0 14 14"><path d="M1 4l4-3 7 1v7l-4 4-7-2z" fill="#15154a" stroke="#0a0a30" stroke-width=".5"/><path d="M1 4l4-3 7 1-4 3z" fill="#3ad8e8"/><path d="M8 5l4-3v7l-4 4z" fill="#1a1a5a"/><path d="M1 4l7 1v8l-7-2z" fill="#e8e850"/><path d="M3 6l3 .5v3L3 9z" fill="#15154a"/></svg><svg style="position:absolute;left:635.5px;top:29.5px;" width="13" height="13" viewBox="0 0 14 14"><path d="M1 11l4-9 7 2-3 8z" fill="#f4f4f0" stroke="#222" stroke-width=".7"/><path d="M5 2l4-1 3 3-3 2z" fill="#e8d840"/><path d="M4 7l6 1-1 4-6-1z" fill="#2a4ad8"/><path d="M6 5c2-1 3 0 3 2" stroke="#222" stroke-width=".6" fill="none"/></svg><svg style="position:absolute;left:651.5px;top:29.5px;" width="13" height="13" viewBox="0 0 14 14"><path d="M1 10l3-6 4 1 4-3v7l-4 3z" fill="#adabc2" stroke="#9c9ab2" stroke-width=".8"/></svg><div style="position:absolute;left:672px;top:29px;width:1px;height:13px;background:#a5a4be"></div><div style="position:absolute;left:673px;top:29px;width:1px;height:13px;background:#e8e7f4"></div><svg style="position:absolute;left:678px;top:29px;" width="14" height="14" viewBox="0 0 14 14"><path d="M1 3c3-2 5 1 7 0s3-1 5 0v3c-2-1-3-1-5 0s-4-2-7 0z" fill="#3ad0e8" stroke="#1a6a8a" stroke-width=".5"/><path d="M1 6c3-2 5 1 7 0s3-1 5 0v3c-2-1-3-1-5 0s-4-2-7 0z" fill="#e8e060" stroke="#6a6a10" stroke-width=".5"/><path d="M1 9c3-2 5 1 7 0s3-1 5 0v3c-2-1-3-1-5 0s-4-2-7 0z" fill="#3ab0e0" stroke="#1a4a8a" stroke-width=".5"/></svg><div style="position:absolute;left:700px;top:29px;width:1px;height:13px;background:#a5a4be"></div><div style="position:absolute;left:701px;top:29px;width:1px;height:13px;background:#e8e7f4"></div><svg style="position:absolute;left:706.5px;top:29.5px;" width="13" height="13" viewBox="0 0 14 14"><path d="M1 6l5-3 7 2-1 5-5 3-6-3z" fill="#adabc2" stroke="#9c9ab2" stroke-width=".8"/><path d="M1 6l6 3 5-4M7 9v4" stroke="#9c9ab2" stroke-width=".6" fill="none"/></svg><svg style="position:absolute;left:725.0px;top:29.5px;" width="13" height="13" viewBox="0 0 14 14"><path d="M3 2h6v10H3z" fill="#adabc2" stroke="#9c9ab2" stroke-width=".8"/><path d="M5 4c3 0 3 5 0 6" stroke="#9c9ab2" stroke-width=".8" fill="none"/></svg><svg style="position:absolute;left:740.5px;top:29.5px;" width="13" height="13" viewBox="0 0 14 14"><path d="M2 12l3-10h6l-3 10z" fill="#9c9ab2" stroke="#8a88a2" stroke-width=".6"/><path d="M4 11l2.500-8" stroke="#dcdbe8" stroke-width="1"/></svg><svg style="position:absolute;left:756.0px;top:29.5px;" width="13" height="13" viewBox="0 0 14 14"><path d="M1 12l4-10h3l-4 10zM6 12l4-10h3l-4 10z" fill="#9c9ab2"/><path d="M5 11l3.500-8" stroke="#dcdbe8" stroke-width=".8"/></svg><svg style="position:absolute;left:773.0px;top:29.5px;" width="13" height="13" viewBox="0 0 14 14"><rect x="2" y="2" width="10" height="10" fill="#adabc2" stroke="#9c9ab2" stroke-width=".9"/><path d="M4 10l6-6M4 4h3v3" stroke="#9c9ab2" stroke-width=".8" fill="none"/></svg><svg style="position:absolute;left:787.5px;top:29.5px;" width="13" height="13" viewBox="0 0 14 14"><circle cx="7" cy="7" r="5.500" fill="#adabc2" stroke="#9c9ab2" stroke-width=".9"/><path d="M1.500 7h11M7 1.500v11" stroke="#9c9ab2" stroke-width=".7"/></svg><svg style="position:absolute;left:804.5px;top:29.5px;" width="13" height="13" viewBox="0 0 14 14"><path d="M1 9l4-5h8l-3 5z" fill="#adabc2" stroke="#9c9ab2" stroke-width=".8"/><path d="M1 9v3h9V9M10 12l3-5V4" stroke="#9c9ab2" stroke-width=".7" fill="none"/><path d="M4 7l5-2" stroke="#9c9ab2" stroke-width="1.200"/></svg><svg style="position:absolute;left:516px;top:42px;" width="4" height="3" viewBox="0 0 4 3"><path d="M0 0h4L2 2.600z" fill="#111"/></svg><svg style="position:absolute;left:533px;top:42px;" width="4" height="3" viewBox="0 0 4 3"><path d="M0 0h4L2 2.600z" fill="#111"/></svg><svg style="position:absolute;left:630px;top:42px;" width="4" height="3" viewBox="0 0 4 3"><path d="M0 0h4L2 2.600z" fill="#111"/></svg><svg style="position:absolute;left:690.5px;top:42px;" width="4" height="3" viewBox="0 0 4 3"><path d="M0 0h4L2 2.600z" fill="#111"/></svg><svg style="position:absolute;left:717.5px;top:42px;" width="4" height="3" viewBox="0 0 4 3"><path d="M0 0h4L2 2.600z" fill="#111"/></svg><svg style="position:absolute;left:750.5px;top:42px;" width="4" height="3" viewBox="0 0 4 3"><path d="M0 0h4L2 2.600z" fill="#111"/></svg><svg style="position:absolute;left:816px;top:42px;" width="4" height="3" viewBox="0 0 4 3"><path d="M0 0h4L2 2.600z" fill="#111"/></svg>
<svg style="position:absolute;left:11.5px;top:437.5px;" width="13" height="13" viewBox="0 0 14 14"><path d="M2 1h7l3 3v9H2z" fill="#fffde0" stroke="#8a8a6a" stroke-width=".6"/><path d="M9 1v3h3" fill="#e8e6a0" stroke="#8a8a6a" stroke-width=".5"/></svg><svg style="position:absolute;left:26.5px;top:437.5px;" width="13" height="13" viewBox="0 0 14 14"><path d="M1 4h4l1 1h5v2H1z" fill="#c9a227"/><path d="M1 12V5h10v1h2l-2 6z" fill="#f2d64b" stroke="#7a6510" stroke-width=".6"/><path d="M9 2c2-1 3 0 3 2" stroke="#333" stroke-width=".7" fill="none"/></svg><svg style="position:absolute;left:42.5px;top:437.5px;" width="13" height="13" viewBox="0 0 14 14"><rect x="1" y="1" width="12" height="12" fill="#6a6a14" stroke="#222" stroke-width=".6"/><rect x="3" y="1.5" width="8" height="5" fill="#e8e84a"/><rect x="4" y="8.5" width="6" height="4" fill="#1a1a1a"/><rect x="5" y="9.5" width="1.6" height="2.5" fill="#ccc"/></svg><svg style="position:absolute;left:58.5px;top:437.5px;" width="13" height="13" viewBox="0 0 14 14"><path d="M3 5l2-4h6l-1 4z" fill="#f4f4e0" stroke="#666" stroke-width=".5"/><path d="M1 6l2-1h9l1 1v4l-2 2H1z" fill="#a9a97a" stroke="#444" stroke-width=".6"/><path d="M2 8h9" stroke="#e8e84a" stroke-width="1.2"/><path d="M1 10h10" stroke="#555" stroke-width=".6"/></svg><svg style="position:absolute;left:74.5px;top:437.5px;" width="13" height="13" viewBox="0 0 14 14"><path d="M4 1l3 7M9 1l-3 7" stroke="#9c9ab2" stroke-width="1" fill="none"/><circle cx="4.5" cy="10.5" r="1.8" fill="none" stroke="#9c9ab2"/><circle cx="8.5" cy="10.5" r="1.8" fill="none" stroke="#9c9ab2"/></svg><svg style="position:absolute;left:90.5px;top:437.5px;" width="13" height="13" viewBox="0 0 14 14"><rect x="1" y="1" width="7" height="9" fill="#adabc2" stroke="#9c9ab2"/><rect x="5" y="4" width="7" height="9" fill="#c9c8dc" stroke="#9c9ab2"/></svg><svg style="position:absolute;left:106.5px;top:437.5px;" width="13" height="13" viewBox="0 0 14 14"><rect x="1" y="2" width="9" height="10" fill="#8a8a30" stroke="#333" stroke-width=".6"/><rect x="3" y="1" width="5" height="2.5" fill="#d8d870" stroke="#333" stroke-width=".4"/><rect x="5" y="6" width="8" height="7" fill="#f0f0f8" stroke="#2a2a80" stroke-width=".6"/><rect x="6.5" y="8" width="5" height="3.5" fill="#4a5ad0"/></svg><svg style="position:absolute;left:123.0px;top:437.5px;" width="13" height="13" viewBox="0 0 14 14"><path d="M2 5l4-4v2.5c4 0 6 2 6 5.5-1-2-3-3-6-3V9z" fill="#2fb24c" stroke="#0a5a1a" stroke-width=".6"/></svg><svg style="position:absolute;left:139.5px;top:437.5px;" width="13" height="13" viewBox="0 0 14 14"><path d="M12 5l-4-4v2.5c-4 0-6 2-6 5.5 1-2 3-3 6-3V9z" fill="#adabc2" stroke="#9c9ab2" stroke-width=".6"/></svg><svg style="position:absolute;left:156.5px;top:437.5px;" width="13" height="13" viewBox="0 0 14 14"><path d="M1 2l4 9 1-3 3 0z" fill="#f4e25a" stroke="#444" stroke-width=".5"/><text x="6.2" y="12" font-family="Liberation Sans" font-weight="bold" font-size="12" fill="#15156a">?</text></svg><svg style="position:absolute;left:183.5px;top:437.5px;" width="13" height="13" viewBox="0 0 14 14"><text x="0" y="11" font-family="Liberation Serif" font-style="italic" font-size="12" fill="#111">f</text><text x="4.5" y="11" font-family="Liberation Sans" font-size="7" fill="#111">(x)</text></svg><svg style="position:absolute;left:200.0px;top:437.5px;" width="13" height="13" viewBox="0 0 14 14"><path d="M2 2h9a1.5 1.5 0 0 1 1.5 1.5v4A1.5 1.5 0 0 1 11 9H6l-3.5 3.5L3.5 9H2A1.5 1.5 0 0 1 .7 7.500v-4A1.5 1.5 0 0 1 2 2z" fill="#f4f4fa" stroke="#111" stroke-width=".9"/><path d="M4 5.500c1-1.500 3-1.500 4 0s2 1 2 0" stroke="#333" stroke-width=".6" fill="none"/></svg><svg style="position:absolute;left:214.5px;top:437.5px;" width="13" height="13" viewBox="0 0 14 14"><rect x="4" y="3" width="2" height="6" fill="#adabc2"/><rect x="8" y="3" width="2" height="6" fill="#adabc2"/></svg><svg style="position:absolute;left:228.5px;top:437.5px;" width="13" height="13" viewBox="0 0 14 14"><rect x="1" y="1" width="12" height="11" fill="#4a4a68" stroke="#222" stroke-width=".6"/><rect x="1" y="1" width="12" height="2.5" fill="#2a2ab0"/><path d="M1 6h12M1 8.500h12" stroke="#8a8aa8" stroke-width=".5"/></svg><svg style="position:absolute;left:246.5px;top:437.5px;" width="13" height="13" viewBox="0 0 14 14"><path d="M3 7h3V3h3M6 7v4h3M6 7h3" stroke="#222" stroke-width=".6" fill="none"/><rect x="0.500" y="5.500" width="3" height="3" fill="#f0d040" stroke="#333" stroke-width=".4"/><rect x="9" y="1.500" width="3" height="3" fill="#4a6af0"/><rect x="9" y="5.500" width="3" height="3" fill="#4a6af0"/><rect x="9" y="9.500" width="3" height="3" fill="#4a6af0"/></svg><svg style="position:absolute;left:262.5px;top:437.5px;" width="13" height="13" viewBox="0 0 14 14"><path d="M4 6V4a3 3 0 0 1 6 0v2" stroke="#555" stroke-width="1.3" fill="none"/><rect x="2.500" y="6" width="9" height="7" rx="1" fill="#8a8a92" stroke="#333" stroke-width=".6"/><circle cx="7" cy="9.500" r="1.200" fill="#222"/></svg><svg style="position:absolute;left:278.5px;top:437.5px;" width="13" height="13" viewBox="0 0 14 14"><rect x="1" y="1" width="5" height="4" fill="#2fa84a"/><rect x="1" y="5" width="5" height="4" fill="#e8d84a"/><rect x="1" y="9" width="5" height="4" fill="#3a5ad8"/><path d="M7 3h3v8H7M10 7h3" stroke="#444" stroke-width=".8" fill="none"/></svg><svg style="position:absolute;left:305.5px;top:437.5px;" width="13" height="13" viewBox="0 0 14 14"><path d="M1 3l4 3 6-2 2 1-5 3 1 4-2-1-2-3-3 0z" fill="#3a9ae8" stroke="#1a3a80" stroke-width=".6"/></svg><svg style="position:absolute;left:321.5px;top:437.5px;" width="13" height="13" viewBox="0 0 14 14"><rect x="1" y="1" width="12" height="12" fill="#e4f08a" stroke="#3a8a8a" stroke-width=".8"/><path d="M2 2l3 1-2 2zM12 2l-1 3-2-2zM2 12l1-3 2 2zM12 12l-3-1 2-2z" fill="#111"/><rect x="6" y="6" width="2" height="2" fill="#111"/></svg><svg style="position:absolute;left:338.0px;top:437.5px;" width="13" height="13" viewBox="0 0 14 14"><path d="M7 0l2.500 3h-1.700v2.200h2.200V3.500L13 7l-3 2.500V7.800H8.800V10h1.700L7 13 4.500 10h1.700V7.800H4V9.500L1 7l3-3.500v1.700h2.200V3H4.500z" fill="#1a1a7a"/><circle cx="7" cy="6.500" r="1.300" fill="#8ab0f0"/></svg><svg style="position:absolute;left:354.0px;top:437.5px;" width="13" height="13" viewBox="0 0 14 14"><path d="M2 4c3-3 8-3 10 1" stroke="#1a3a9a" stroke-width="1" fill="none"/><path d="M12 5l.5-3 1.500 3z" fill="#1a3a9a"/><path d="M2 7c2-2 6-1 8 0 2 1 2 3 0 4-2 1-5 1-7-1z" fill="#f0a0a0" stroke="#7a2a2a" stroke-width=".5"/><path d="M5 9c2-1 5-1 7 1-2 2-5 2-7-1z" fill="#3a9ae0"/></svg><svg style="position:absolute;left:370.0px;top:437.5px;" width="13" height="13" viewBox="0 0 14 14"><circle cx="5.500" cy="5.500" r="4" fill="#e8f4ff" stroke="#1a2a7a" stroke-width="1.300"/><path d="M8.500 8.500l4 4" stroke="#1a6a8a" stroke-width="2.200"/><path d="M3.500 5.500h4M5.500 3.500v4" stroke="#111" stroke-width="1"/></svg><svg style="position:absolute;left:386.0px;top:437.5px;" width="13" height="13" viewBox="0 0 14 14"><circle cx="5.500" cy="5.500" r="4" fill="#e8f4ff" stroke="#1a2a7a" stroke-width="1.300"/><path d="M8.500 8.500l4 4" stroke="#1a6a8a" stroke-width="2.200"/><path d="M3.500 5.500h4" stroke="#111" stroke-width="1"/></svg><svg style="position:absolute;left:402.0px;top:437.5px;" width="13" height="13" viewBox="0 0 14 14"><path d="M0 10l5-3h8l-4 5z" fill="#3ac8d8" stroke="#1a6a8a" stroke-width=".6"/><path d="M6.500 9V2" stroke="#c05050" stroke-width="1"/><path d="M4.500 4l2-3.500 2 3.500z" fill="#e8a040"/></svg><svg style="position:absolute;left:418.5px;top:437.5px;" width="13" height="13" viewBox="0 0 14 14"><rect x="1" y="1" width="12" height="12" fill="#2a4ad8" stroke="#1a1a7a" stroke-width=".6"/><rect x="2.500" y="2.500" width="4" height="4" fill="#3ad8e8"/><rect x="7.500" y="2.500" width="4" height="4" fill="#3ad8e8"/><rect x="2.500" y="7.500" width="4" height="4" fill="#3ad8e8"/><rect x="7.500" y="7.500" width="4" height="4" fill="#3ad8e8"/></svg><svg style="position:absolute;left:434.5px;top:437.5px;" width="13" height="13" viewBox="0 0 14 14"><path d="M1 4l3-3h9v9l-3 3H1z" fill="#3ac8f0" stroke="#1a3a9a" stroke-width=".7"/><path d="M1 4h9v9M10 4l3-3" stroke="#1a3a9a" stroke-width=".7" fill="none"/><path d="M1 4l3-3h9l-3 3z" fill="#8ae8ff"/></svg><svg style="position:absolute;left:451.5px;top:437.5px;" width="13" height="13" viewBox="0 0 14 14"><rect x="2" y="1" width="10" height="12" rx="1" fill="#e4e4ee" stroke="#666" stroke-width=".7"/><text x="4.300" y="10.500" font-family="Liberation Sans" font-weight="bold" font-size="9" fill="#222">?</text></svg><svg style="position:absolute;left:468.0px;top:437.5px;" width="13" height="13" viewBox="0 0 14 14"><rect x="1" y="1" width="12" height="12" fill="#d8d8e4" stroke="#444" stroke-width=".7"/><rect x="2.500" y="2.500" width="9" height="9" fill="#3ac0d8"/><path d="M3 9l3-4 2 2 3-3" stroke="#e8d84a" stroke-width="1.200" fill="none"/></svg><svg style="position:absolute;left:484.5px;top:437.5px;" width="13" height="13" viewBox="0 0 14 14"><rect x="1" y="1" width="12" height="12" fill="#d8d8e4" stroke="#444" stroke-width=".7"/><rect x="2.500" y="2.500" width="9" height="9" fill="#3ac0d8"/><path d="M3 10l4-4 4 1" stroke="#e8d84a" stroke-width="1.200" fill="none"/><path d="M3 4h5" stroke="#2a4ab0" stroke-width="1"/></svg><svg style="position:absolute;left:510.5px;top:437.5px;" width="13" height="13" viewBox="0 0 14 14"><circle cx="4" cy="3" r="2" fill="#2a5ad8"/><path d="M7 3h5l-2-2M12 3l-2 2" stroke="#2a5ad8" stroke-width=".8" fill="none"/><path d="M1 8l3-2h8v5l-3 2H1z" fill="#d0d0dc" stroke="#333" stroke-width=".6"/><path d="M1 8h8v5M9 8l3-2" stroke="#333" stroke-width=".5" fill="none"/></svg><svg style="position:absolute;left:538.0px;top:437.5px;" width="13" height="13" viewBox="0 0 14 14"><path d="M1 4h12M1 4l2.500-2M1 4l2.500 2M13 4l-2.500-2M13 4l-2.500 2" stroke="#2a4ad0" stroke-width="1" fill="none"/><rect x="1" y="8" width="12" height="4" fill="#f0e08a" stroke="#a04060" stroke-width=".6"/><path d="M3 8v2M5 8v2M7 8v2M9 8v2M11 8v2" stroke="#a04060" stroke-width=".5"/></svg><svg style="position:absolute;left:553.5px;top:437.5px;" width="13" height="13" viewBox="0 0 14 14"><path d="M2 3l6-2 4 1v9l-4 2-6-2z" fill="#3a3a48" stroke="#111" stroke-width=".6"/><path d="M4 5l3-1v3l-3 1z" fill="#7ac0a0"/><path d="M8 3v9" stroke="#111" stroke-width=".5"/></svg><svg style="position:absolute;left:570.5px;top:437.5px;" width="13" height="13" viewBox="0 0 14 14"><circle cx="7" cy="2.500" r="1.500" fill="none" stroke="#5a5a10" stroke-width="1"/><path d="M4 5h6l1 8H3z" fill="#b8b030" stroke="#4a4a10" stroke-width=".6"/><path d="M5 6h1.500l.5 6H4.500z" fill="#e8e070"/></svg><svg style="position:absolute;left:596.5px;top:437.5px;" width="13" height="13" viewBox="0 0 14 14"><rect x="1" y="4" width="12" height="7" rx="1" fill="#2a2a32" stroke="#111" stroke-width=".5"/><rect x="4" y="2.500" width="5" height="2" fill="#3a3a44"/><circle cx="7" cy="7.500" r="2.300" fill="#8a8a98" stroke="#ddd" stroke-width=".6"/><rect x="10.500" y="5" width="1.500" height="1" fill="#ddd"/></svg><svg style="position:absolute;left:623.5px;top:437.5px;" width="13" height="13" viewBox="0 0 14 14"><rect x="1" y="2" width="8" height="8" fill="#adabc2" stroke="#9c9ab2"/><path d="M6 6h6v6H6z" fill="#cfcee2" stroke="#9c9ab2"/></svg><svg style="position:absolute;left:640.0px;top:437.5px;" width="13" height="13" viewBox="0 0 14 14"><rect x="1" y="2" width="11" height="11" fill="#8ad8d8" stroke="#2a4a4a" stroke-width="1"/><rect x="3" y="1" width="7" height="2" fill="#e8e8c0" stroke="#555" stroke-width=".4"/><rect x="3" y="4.500" width="7" height="6.500" fill="#b0ecec"/></svg><svg style="position:absolute;left:667.5px;top:437.5px;" width="13" height="13" viewBox="0 0 14 14"><path d="M3 11V5M3 11h7M3 11l-2 2" stroke="#5a5aa8" stroke-width=".8" fill="none"/><text x="5" y="6" font-family="Liberation Sans" font-size="5" fill="#3a3aa0">abc</text><circle cx="3" cy="11" r="1.200" fill="#2a2a9a"/></svg><svg style="position:absolute;left:696.0px;top:437.5px;" width="13" height="13" viewBox="0 0 14 14"><path d="M2 4l5-3 5 3v6l-5 3-5-3z" fill="#6a8ae8" stroke="#2a3a9a" stroke-width=".6"/><path d="M7 7l5-3M7 7v6M7 7L2 4" stroke="#2a3a9a" stroke-width=".5"/><circle cx="8" cy="5" r="2.500" fill="none" stroke="#e04060" stroke-width="1"/><circle cx="5" cy="9" r="1.500" fill="#b0c0f8"/></svg><svg style="position:absolute;left:723.0px;top:437.5px;" width="13" height="13" viewBox="0 0 14 14"><path d="M1 9l5-4 7 2-5 5z" fill="#3ac8e0" stroke="#1a5a7a" stroke-width=".5"/><path d="M1 9v2l7 3v-2z" fill="#d03040"/><path d="M8 12v2l5-5V7z" fill="#8a2030"/><path d="M6 1l1.500 3L10 3 8.500 5.500 11 7 8 7 7 9.500 6 7 3.500 7 5.500 5z" fill="#f4e040" stroke="#806010" stroke-width=".3"/></svg><svg style="position:absolute;left:751.5px;top:437.5px;" width="13" height="13" viewBox="0 0 14 14"><path d="M2 7h10l-1.500 6h-7z" fill="#e89038" stroke="#6a3a10" stroke-width=".6"/><path d="M3 7c0-5 8-5 8 0" stroke="#8a4a18" stroke-width="1" fill="none"/><path d="M8 7l3-6 1.500 1L10 7z" fill="#f0d8b0" stroke="#6a3a10" stroke-width=".5"/><path d="M4 9h6M4.500 11h5" stroke="#6a3a10" stroke-width=".5"/></svg><div style="position:absolute;left:178px;top:437px;width:1px;height:13px;background:#b0aec8"></div><div style="position:absolute;left:179px;top:437px;width:1px;height:13px;background:#e2e1ee"></div><div style="position:absolute;left:300px;top:437px;width:1px;height:13px;background:#b0aec8"></div><div style="position:absolute;left:301px;top:437px;width:1px;height:13px;background:#e2e1ee"></div><div style="position:absolute;left:505px;top:437px;width:1px;height:13px;background:#b0aec8"></div><div style="position:absolute;left:506px;top:437px;width:1px;height:13px;background:#e2e1ee"></div><div style="position:absolute;left:530px;top:437px;width:1px;height:13px;background:#b0aec8"></div><div style="position:absolute;left:531px;top:437px;width:1px;height:13px;background:#e2e1ee"></div><div style="position:absolute;left:590px;top:437px;width:1px;height:13px;background:#b0aec8"></div><div style="position:absolute;left:591px;top:437px;width:1px;height:13px;background:#e2e1ee"></div><div style="position:absolute;left:618px;top:437px;width:1px;height:13px;background:#b0aec8"></div><div style="position:absolute;left:619px;top:437px;width:1px;height:13px;background:#e2e1ee"></div><div style="position:absolute;left:660px;top:437px;width:1px;height:13px;background:#b0aec8"></div><div style="position:absolute;left:661px;top:437px;width:1px;height:13px;background:#e2e1ee"></div><div style="position:absolute;left:689px;top:437px;width:1px;height:13px;background:#b0aec8"></div><div style="position:absolute;left:690px;top:437px;width:1px;height:13px;background:#e2e1ee"></div><div style="position:absolute;left:716px;top:437px;width:1px;height:13px;background:#b0aec8"></div><div style="position:absolute;left:717px;top:437px;width:1px;height:13px;background:#e2e1ee"></div><div style="position:absolute;left:745px;top:437px;width:1px;height:13px;background:#b0aec8"></div><div style="position:absolute;left:746px;top:437px;width:1px;height:13px;background:#e2e1ee"></div><div style="position:absolute;left:2px;top:437px;width:1px;height:13px;background:#ecebf4"></div><div style="position:absolute;left:4px;top:437px;width:1px;height:13px;background:#ecebf4"></div><svg style="position:absolute;left:134.5px;top:449.5px;" width="4" height="3" viewBox="0 0 4 3"><path d="M0 0h4L2 2.600z" fill="#111"/></svg><svg style="position:absolute;left:150.5px;top:449.5px;" width="4" height="3" viewBox="0 0 4 3"><path d="M0 0h4L2 2.600z" fill="#111"/></svg><svg style="position:absolute;left:240px;top:449.5px;" width="4" height="3" viewBox="0 0 4 3"><path d="M0 0h4L2 2.600z" fill="#111"/></svg><svg style="position:absolute;left:273.5px;top:449.5px;" width="4" height="3" viewBox="0 0 4 3"><path d="M0 0h4L2 2.600z" fill="#111"/></svg><svg style="position:absolute;left:446px;top:449.5px;" width="4" height="3" viewBox="0 0 4 3"><path d="M0 0h4L2 2.600z" fill="#111"/></svg><svg style="position:absolute;left:462.5px;top:449.5px;" width="4" height="3" viewBox="0 0 4 3"><path d="M0 0h4L2 2.600z" fill="#111"/></svg><svg style="position:absolute;left:679px;top:449.5px;" width="4" height="3" viewBox="0 0 4 3"><path d="M0 0h4L2 2.600z" fill="#111"/></svg><svg style="position:absolute;left:707.5px;top:449.5px;" width="4" height="3" viewBox="0 0 4 3"><path d="M0 0h4L2 2.600z" fill="#111"/></svg><div style="position:absolute;left:859px;top:432px;width:21px;height:22px;background:#c8c6dc;border-left:1.5px solid #dddcea"></div><svg style="position:absolute;left:850px;top:430px;" width="30" height="22" viewBox="0 0 30 22"><text x="8" y="8.500" font-family="Liberation Sans" font-style="italic" font-weight="bold" font-size="7.500" fill="#d83060">3</text><text x="2.500" y="16" font-family="Liberation Sans" font-style="italic" font-weight="bold" font-size="9" fill="#2a2a80">D</text><text x="10.500" y="15" font-family="Liberation Sans" font-style="italic" font-weight="bold" font-size="7.500" fill="#d8b030">S</text><text x="7" y="20" font-family="Liberation Sans" font-style="italic" font-weight="bold" font-size="4.800" fill="#2a2a80" textLength="18" lengthAdjust="spacingAndGlyphs">CATIA</text></svg>
<div style="position:absolute;left:735px;top:450px;width:138px;height:39px;background:#e7e7e7;border-radius:3.5px;box-shadow:0 0 1.5px rgba(60,60,60,.6)"><div style="position:absolute;left:6.5px;top:.5px;font-size:24px;line-height:26px;color:#1c1c1c;white-space:nowrap;transform:scaleX(1.165);transform-origin:0 0">CGer.com</div><div style="position:absolute;left:21.5px;top:23.5px;font-size:10.5px;line-height:14px;color:#333;white-space:nowrap;transform:scaleX(1.25);transform-origin:0 0">CG资源 CG网站</div></div>
</body></html>
